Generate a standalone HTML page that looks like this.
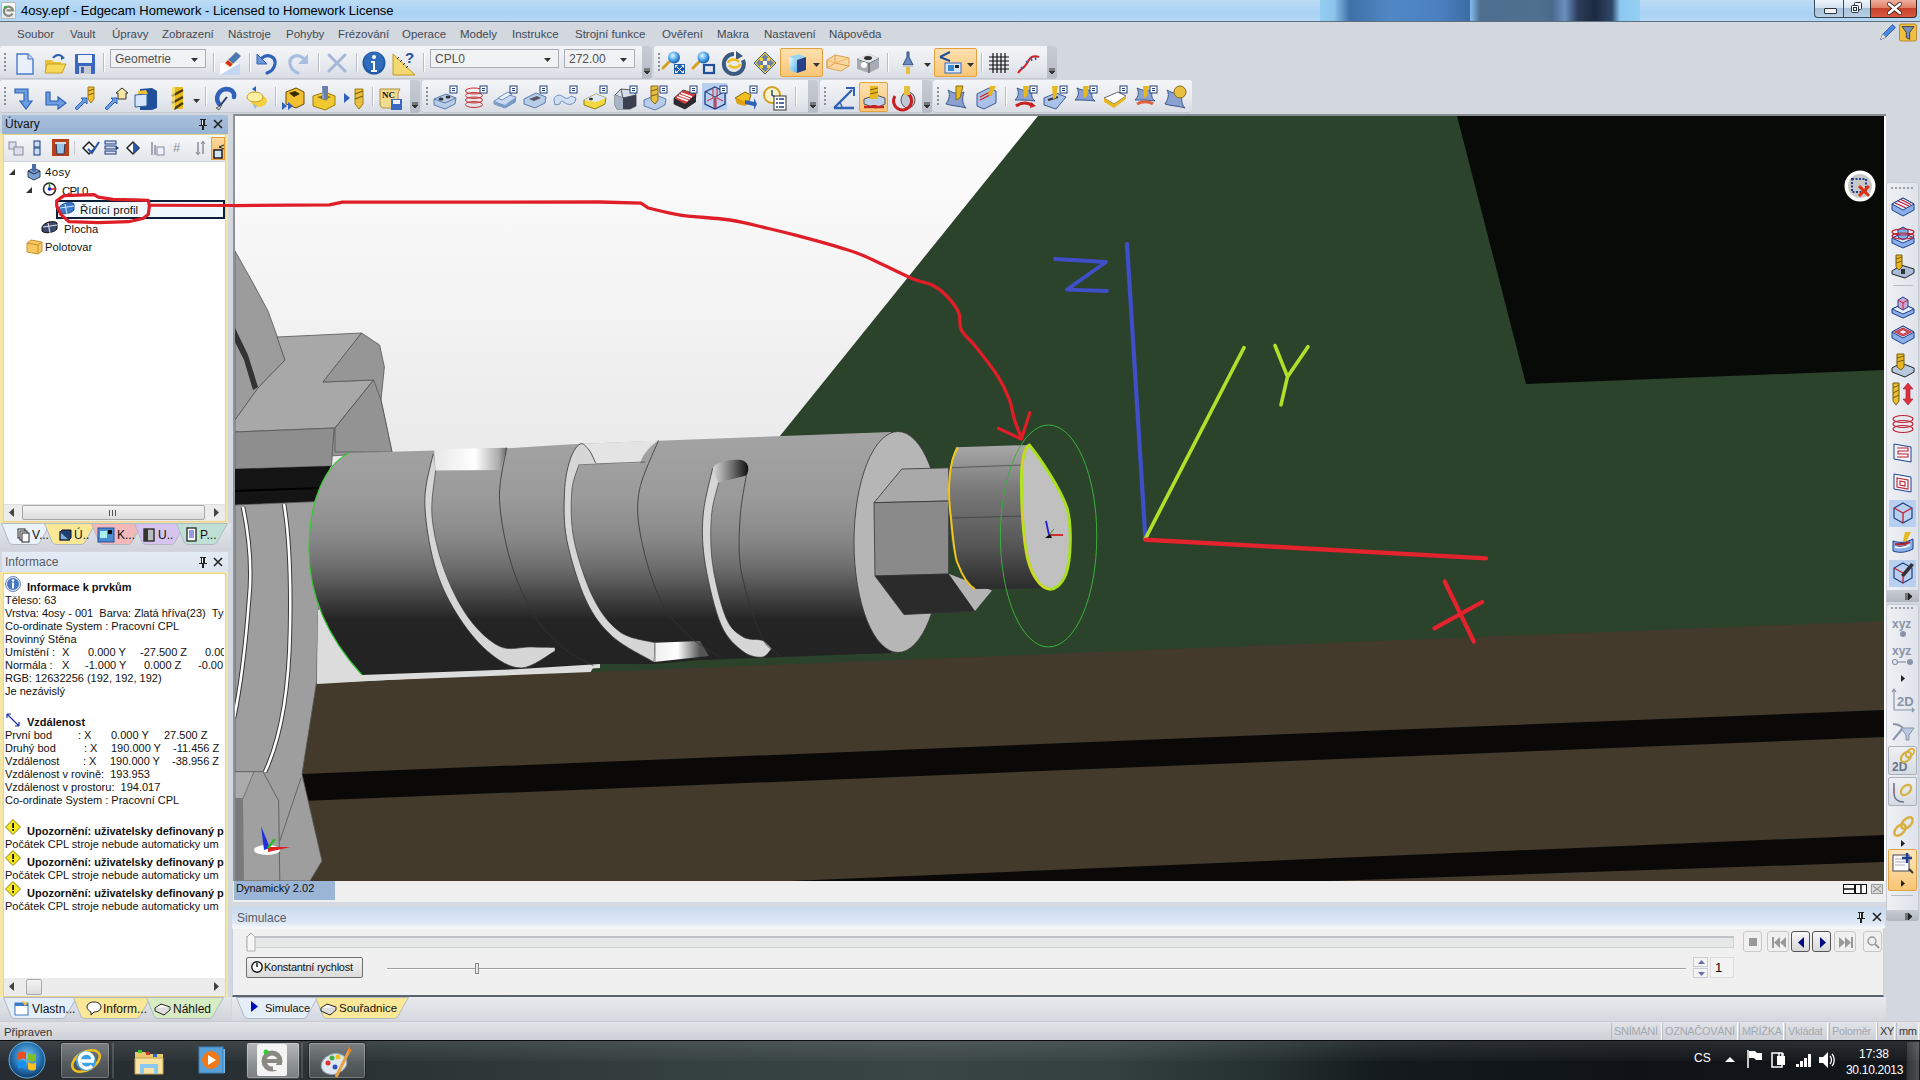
<!DOCTYPE html>
<html><head><meta charset="utf-8"><style>
html,body{margin:0;padding:0;}
svg{display:block;}
body{width:1920px;height:1080px;position:relative;overflow:hidden;background:#d3d7de;font-family:"Liberation Sans", sans-serif;}
</style></head><body>
<div style="position:absolute;left:0px;top:0px;width:1920px;height:22px;background:linear-gradient(#bcdcf6,#a9d2f4 60%,#b6d9f5);"></div><div style="position:absolute;left:1320px;top:0px;width:320px;height:21px;background:linear-gradient(90deg,#92cdf2 0px,#8cc4ec 14px,#3f70a8 30px,#5088c4 70px,#4a80c0 120px,#3c6ca4 150px,#4e86c2 140px,#82b8e6 150px,#7ab0e0 152px,#4e6e90 160px,#50708f 220px,#4a6a8c 232px,#6a90c0 245px,#2a3c58 258px,#1c2a40 275px,#30486a 292px,#8cc8f0 300px,#94d0f4 320px);"></div><div style="position:absolute;left:1px;top:2px;width:15px;height:17px;background:linear-gradient(#fdfdfd,#e8e8e8);border:1px solid #b8b8b8;border-radius:1px;box-sizing:border-box;"><svg width="13" height="15" viewBox="0 0 13 15"><path d="M10.5 10.5A4.6 4.6 0 1 1 11 7.4H4.5" fill="none" stroke="#8a8a80" stroke-width="2.4"/><circle cx="3.3" cy="4.2" r="1.4" fill="#40b040"/></svg></div><div style="position:absolute;left:21px;top:4px;font-size:13px;color:#000;white-space:nowrap;line-height:1;">4osy.epf - Edgecam Homework - Licensed to Homework License</div><div style="position:absolute;left:1814px;top:0px;width:29px;height:18px;background:linear-gradient(#eef4fa,#d4e2f0 45%,#a9c2da 50%,#b8d0e6);border:1px solid #3c4a5a;border-top:none;border-right:none;border-radius:0 0 0 4px;box-sizing:border-box;"><div style="position:absolute;left:9px;top:8px;width:11px;height:4px;background:#f4f4f4;border:1px solid #2a3440;border-radius:1px;"></div></div><div style="position:absolute;left:1843px;top:0px;width:27px;height:18px;background:linear-gradient(#eef4fa,#d4e2f0 45%,#a9c2da 50%,#b8d0e6);border:1px solid #3c4a5a;border-top:none;border-right:none;box-sizing:border-box;"><svg style="position:absolute;left:7px;top:2px;overflow:visible" width="12" height="12" viewBox="0 0 12 12"><rect x="3.5" y="0.5" width="7" height="7" rx="1" fill="#f4f4f4" stroke="#2a3440"/><rect x="0.5" y="3.5" width="7" height="7" rx="1" fill="#f4f4f4" stroke="#2a3440"/><rect x="2.5" y="5.5" width="3" height="3" fill="none" stroke="#2a3440"/></svg></div><div style="position:absolute;left:1870px;top:0px;width:47px;height:18px;background:linear-gradient(#f0b0a0,#e08068 45%,#c8402a 50%,#d85a40);border:1px solid #3c2a24;border-top:none;border-radius:0 0 4px 0;box-sizing:border-box;"><svg style="position:absolute;left:16px;top:3px;overflow:visible" width="15" height="11" viewBox="0 0 15 11"><path d="M2 1l11 9M13 1L2 10" stroke="#3a2a28" stroke-width="4.2" stroke-linecap="round"/><path d="M2 1l11 9M13 1L2 10" stroke="#fff" stroke-width="2.6" stroke-linecap="round"/></svg></div><div style="position:absolute;left:0px;top:21px;width:1920px;height:1px;background:#5f6f80;"></div><div style="position:absolute;left:0px;top:22px;width:1920px;height:24px;background:#d3d7de;"></div><div style="position:absolute;left:17px;top:29px;font-size:11.5px;color:#414a56;white-space:nowrap;line-height:1;">Soubor</div><div style="position:absolute;left:70px;top:29px;font-size:11.5px;color:#414a56;white-space:nowrap;line-height:1;">Vault</div><div style="position:absolute;left:112px;top:29px;font-size:11.5px;color:#414a56;white-space:nowrap;line-height:1;">Úpravy</div><div style="position:absolute;left:162px;top:29px;font-size:11.5px;color:#414a56;white-space:nowrap;line-height:1;">Zobrazení</div><div style="position:absolute;left:228px;top:29px;font-size:11.5px;color:#414a56;white-space:nowrap;line-height:1;">Nástroje</div><div style="position:absolute;left:286px;top:29px;font-size:11.5px;color:#414a56;white-space:nowrap;line-height:1;">Pohyby</div><div style="position:absolute;left:338px;top:29px;font-size:11.5px;color:#414a56;white-space:nowrap;line-height:1;">Frézování</div><div style="position:absolute;left:402px;top:29px;font-size:11.5px;color:#414a56;white-space:nowrap;line-height:1;">Operace</div><div style="position:absolute;left:460px;top:29px;font-size:11.5px;color:#414a56;white-space:nowrap;line-height:1;">Modely</div><div style="position:absolute;left:512px;top:29px;font-size:11.5px;color:#414a56;white-space:nowrap;line-height:1;">Instrukce</div><div style="position:absolute;left:575px;top:29px;font-size:11.5px;color:#414a56;white-space:nowrap;line-height:1;">Strojní funkce</div><div style="position:absolute;left:662px;top:29px;font-size:11.5px;color:#414a56;white-space:nowrap;line-height:1;">Ověření</div><div style="position:absolute;left:717px;top:29px;font-size:11.5px;color:#414a56;white-space:nowrap;line-height:1;">Makra</div><div style="position:absolute;left:764px;top:29px;font-size:11.5px;color:#414a56;white-space:nowrap;line-height:1;">Nastavení</div><div style="position:absolute;left:829px;top:29px;font-size:11.5px;color:#414a56;white-space:nowrap;line-height:1;">Nápověda</div><svg style="position:absolute;left:1879px;top:23px;overflow:visible" width="18" height="18" viewBox="0 0 24 24"><path d="M2 22l3-7 13-13 4 4L9 19z" fill="#4a8ae0" stroke="#1f4f9a" stroke-width="1"/><path d="M2 22l3-7 4 4z" fill="#f0e0c0"/></svg><svg style="position:absolute;left:1899px;top:24px;overflow:visible" width="18" height="17" viewBox="0 0 20 20"><rect x="0" y="0" width="20" height="20" rx="2" fill="#f0c040" stroke="#b08020" stroke-width="1"/><path d="M3 3h14l-5 7v8l-4-2v-6z" fill="#7a90b8" stroke="#334" stroke-width="1"/></svg><div style="position:absolute;left:0px;top:46px;width:652px;height:33px;background:linear-gradient(#f4f5f8,#e6e9ee 60%,#d9dde4);border-radius:3px;border-bottom:1px solid #c3c8d0;box-sizing:border-box;"></div><div style="position:absolute;left:4px;top:53px;width:2px;height:19px;background:repeating-linear-gradient(#8a909a 0 2px, transparent 2px 4px);"></div><div style="position:absolute;left:642px;top:46px;width:10px;height:33px;background:linear-gradient(#c8ccd4,#b6bcc6);border-radius:0 3px 3px 0;"><svg style="position:absolute;left:1px;top:22px" width="8" height="8"><path d="M1 1h6M1 3h6l-3 3z" stroke="#333" fill="#333" stroke-width="1"/></svg></div><svg style="position:absolute;left:13px;top:52px;overflow:visible" width="24" height="24" viewBox="0 0 24 24"><path d="M4 2h11l5 5v15H4z" fill="#eaf0fb" stroke="#4a78c8" stroke-width="1.4"/><path d="M15 2v5h5" fill="#cfdcf3" stroke="#4a78c8" stroke-width="1.2"/></svg><svg style="position:absolute;left:43px;top:52px;overflow:visible" width="24" height="24" viewBox="0 0 24 24"><path d="M2 8h7l2 2h7v11H2z" fill="#e9c23a"/><path d="M4 12h19l-4 9H2z" fill="#f7d95a" stroke="#c9a020" stroke-width="1"/><path d="M10 6c3-4 8-4 10 0" fill="none" stroke="#2a5fb0" stroke-width="2"/><path d="M18 3l4 3-4 2z" fill="#2a5fb0"/></svg><svg style="position:absolute;left:73px;top:52px;overflow:visible" width="24" height="24" viewBox="0 0 24 24"><rect x="2" y="2" width="20" height="20" rx="1" fill="#3a68c0"/><rect x="5" y="3" width="14" height="8" fill="#eef2f8"/><rect x="6" y="14" width="12" height="8" fill="#c9ccd2"/><rect x="8" y="15" width="3" height="6" fill="#3a68c0"/></svg><div style="position:absolute;left:103px;top:53px;width:1px;height:19px;background:#b9bec6;border-right:1px solid #fff;"></div><div style="position:absolute;left:110px;top:49px;width:96px;height:19px;background:#f1f2f4;border:1px solid #a9adb5;box-sizing:border-box;"><div style="position:absolute;left:4px;top:3px;font-size:12px;color:#505050;white-space:nowrap;line-height:1;">Geometrie</div><svg style="position:absolute;left:80px;top:-2px;overflow:visible" width="8" height="16" viewBox="0 0 8 16"><path d="M0 10h7l-3.5 4z" fill="#333"/></svg></div><div style="position:absolute;left:213px;top:53px;width:1px;height:19px;background:#b9bec6;border-right:1px solid #fff;"></div><svg style="position:absolute;left:219px;top:51px;overflow:visible" width="24" height="24" viewBox="0 0 24 24"><path d="M1 12h20v12H1z" fill="#c5d6f0"/><path d="M1 24l20-12H1z" fill="#fff"/><path d="M9 9l8-8 5 4-8 8z" fill="#4a7ab0"/><path d="M9 9l5 4-3 3-5-4z" fill="#d42a2a" stroke="#e0b040" stroke-width="1"/></svg><div style="position:absolute;left:249px;top:53px;width:1px;height:19px;background:#b9bec6;border-right:1px solid #fff;"></div><svg style="position:absolute;left:255px;top:51px;overflow:visible" width="24" height="24" viewBox="0 0 24 24"><path d="M7 7c6-5 14-1 13 6-1 5-5 8-8 9" fill="none" stroke="#2f62b8" stroke-width="3.2" stroke-linecap="round"/><path d="M2 3v10h10z" fill="#6b97d8" stroke="#2f62b8" stroke-width="1"/></svg><svg style="position:absolute;left:286px;top:51px;overflow:visible" width="24" height="24" viewBox="0 0 24 24"><path d="M17 7c-6-5-14-1-13 6 1 5 5 8 8 9" fill="none" stroke="#a9bde0" stroke-width="3.2" stroke-linecap="round"/><path d="M22 3v10H12z" fill="#a9bde0"/></svg><div style="position:absolute;left:318px;top:53px;width:1px;height:19px;background:#b9bec6;border-right:1px solid #fff;"></div><svg style="position:absolute;left:325px;top:51px;overflow:visible" width="24" height="24" viewBox="0 0 24 24"><path d="M4 4l16 16M20 4L4 20" stroke="#a6b8d8" stroke-width="3" stroke-linecap="round"/></svg><div style="position:absolute;left:356px;top:53px;width:1px;height:19px;background:#b9bec6;border-right:1px solid #fff;"></div><svg style="position:absolute;left:362px;top:51px;overflow:visible" width="24" height="24" viewBox="0 0 24 24"><circle cx="12" cy="12" r="11.5" fill="#1f5aa6"/><circle cx="12" cy="11" r="10" fill="#2f6cbc"/><circle cx="12" cy="6" r="2" fill="#fff"/><path d="M9 10h4v9h2v2H9v-2h2v-7H9z" fill="#fff"/></svg><svg style="position:absolute;left:392px;top:51px;overflow:visible" width="24" height="24" viewBox="0 0 24 24"><path d="M1 3l22 21H1z" fill="#f3d770" stroke="#c59a20" stroke-width="1"/><path d="M5 8l2-2M8 11l2-2M11 14l2-2M14 17l2-2" stroke="#333" stroke-width="1"/><text x="13" y="12" font-size="15" font-weight="bold" fill="#2a4fa0" font-family="Liberation Sans">?</text></svg><div style="position:absolute;left:423px;top:53px;width:1px;height:19px;background:#b9bec6;border-right:1px solid #fff;"></div><div style="position:absolute;left:430px;top:49px;width:129px;height:19px;background:#f1f2f4;border:1px solid #a9adb5;box-sizing:border-box;"><div style="position:absolute;left:4px;top:3px;font-size:12px;color:#505050;white-space:nowrap;line-height:1;">CPL0</div><svg style="position:absolute;left:113px;top:-2px;overflow:visible" width="8" height="16" viewBox="0 0 8 16"><path d="M0 10h7l-3.5 4z" fill="#333"/></svg></div><div style="position:absolute;left:564px;top:49px;width:71px;height:19px;background:#f1f2f4;border:1px solid #a9adb5;box-sizing:border-box;"><div style="position:absolute;left:4px;top:3px;font-size:12px;color:#505050;white-space:nowrap;line-height:1;">272.00</div><svg style="position:absolute;left:55px;top:-2px;overflow:visible" width="8" height="16" viewBox="0 0 8 16"><path d="M0 10h7l-3.5 4z" fill="#333"/></svg></div><div style="position:absolute;left:654px;top:46px;width:403px;height:33px;background:linear-gradient(#f4f5f8,#e6e9ee 60%,#d9dde4);border-radius:3px;border-bottom:1px solid #c3c8d0;box-sizing:border-box;"></div><div style="position:absolute;left:658px;top:53px;width:2px;height:19px;background:repeating-linear-gradient(#8a909a 0 2px, transparent 2px 4px);"></div><div style="position:absolute;left:1047px;top:46px;width:10px;height:33px;background:linear-gradient(#c8ccd4,#b6bcc6);border-radius:0 3px 3px 0;"><svg style="position:absolute;left:1px;top:22px" width="8" height="8"><path d="M1 1h6M1 3h6l-3 3z" stroke="#333" fill="#333" stroke-width="1"/></svg></div><svg style="position:absolute;left:662px;top:51px;overflow:visible" width="24" height="24" viewBox="0 0 24 24"><defs><radialGradient id="mg1" cx="40%" cy="35%" r="60%"><stop offset="0" stop-color="#e8f6ff"/><stop offset=".5" stop-color="#6ab8f0"/><stop offset="1" stop-color="#1a68b8"/></radialGradient></defs><path d="M7 11L1 17" stroke="#d8a020" stroke-width="3" stroke-linecap="round"/><circle cx="12" cy="6.5" r="6" fill="url(#mg1)"/><rect x="12" y="13" width="11" height="10" fill="#1f5aa8"/><path d="M13 14l3 0-3 3zM22 14v3l-3-3zM13 22v-3l3 3zM22 22h-3l3-3z" fill="#fff"/><path d="M15 16l5 5M20 16l-5 5" stroke="#fff" stroke-width="1"/></svg><svg style="position:absolute;left:692px;top:51px;overflow:visible" width="24" height="24" viewBox="0 0 24 24"><path d="M7 11L1 17" stroke="#d8a020" stroke-width="3" stroke-linecap="round"/><circle cx="11.5" cy="6.5" r="6" fill="url(#mg1)"/><rect x="12" y="14" width="10" height="8" fill="none" stroke="#1f4f9a" stroke-width="2.2"/></svg><svg style="position:absolute;left:722px;top:51px;overflow:visible" width="24" height="24" viewBox="0 0 24 24"><path d="M12 3a10 10 0 1 0 9 6" fill="none" stroke="#3a5a80" stroke-width="4"/><path d="M14 0l7 5-7 4z" fill="#3a5a80"/><path d="M6 12c1-4 8-5 11-1" fill="none" stroke="#f0c020" stroke-width="2.5"/><path d="M18 13c-1 4-8 5-11 1" fill="none" stroke="#f0c020" stroke-width="2.5"/></svg><svg style="position:absolute;left:753px;top:51px;overflow:visible" width="24" height="24" viewBox="0 0 24 24"><path d="M12 1l11 11-11 11L1 12z" fill="#f4d040" stroke="#3a5a80" stroke-width="1"/><path d="M12 3l4 4h-2v3h-4V7H8zM12 21l4-4h-2v-3h-4v3H8zM3 12l4-4v2h3v4H7v2zM21 12l-4-4v2h-3v4h3v2z" fill="#6a80a8"/><rect x="10" y="10" width="4" height="4" fill="#fff"/></svg><div style="position:absolute;left:780px;top:48px;width:43px;height:29px;background:linear-gradient(#fde1b0,#f8c576);border:1px solid #e3a23e;border-radius:2px;box-sizing:border-box;"></div><svg style="position:absolute;left:785px;top:51px;overflow:visible" width="24" height="24" viewBox="0 0 24 24"><defs><linearGradient id="cf" x1="0" y1="0" x2="1" y2="1"><stop offset="0" stop-color="#e8fbff"/><stop offset="1" stop-color="#5ab0e8"/></linearGradient></defs><path d="M4 6l10-3 7 3-9 3z" fill="#9ad4f4"/><path d="M4 6l8 3v13l-8-3z" fill="url(#cf)"/><path d="M12 9l9-3v13l-9 3z" fill="#28408a"/></svg><svg style="position:absolute;left:813px;top:53px;overflow:visible" width="8" height="16" viewBox="0 0 8 16"><path d="M0 10h7l-3.5 4z" fill="#333"/></svg><svg style="position:absolute;left:826px;top:51px;overflow:visible" width="24" height="24" viewBox="0 0 24 24"><path d="M1 9l8-5 14 3v8l-8 5-14-3z" fill="#f8d8a0" stroke="#e0a050" stroke-width="1"/><path d="M1 9v8M9 4v8l14 3M9 12l-8 5" fill="none" stroke="#e0a050" stroke-width="1"/><path d="M1 9l8 3 14-5" fill="none" stroke="#f0b860"/></svg><svg style="position:absolute;left:856px;top:51px;overflow:visible" width="24" height="24" viewBox="0 0 24 24"><path d="M1 8l12-5 10 4v10l-10 5-12-4z" fill="#a8acb4"/><path d="M1 8l12 4 10-5" fill="none" stroke="#444" stroke-width="1"/><path d="M13 12v10" stroke="#444"/><ellipse cx="8" cy="14" rx="3" ry="3" fill="#fff"/><path d="M1 8l12-5 10 4-10 5z" fill="#e0e3e8"/><ellipse cx="12" cy="7" rx="4" ry="2" fill="#333"/></svg><div style="position:absolute;left:887px;top:53px;width:1px;height:19px;background:#b9bec6;border-right:1px solid #fff;"></div><svg style="position:absolute;left:896px;top:51px;overflow:visible" width="24" height="24" viewBox="0 0 24 24"><path d="M11 1h2v5l4 8H7l4-8z" fill="#6a8ac0" stroke="#2a4a80" stroke-width="1"/><rect x="10" y="14" width="4" height="9" fill="#e8c040"/><rect x="7" y="14" width="10" height="2" fill="#c0c8d8"/></svg><svg style="position:absolute;left:924px;top:53px;overflow:visible" width="8" height="16" viewBox="0 0 8 16"><path d="M0 10h7l-3.5 4z" fill="#333"/></svg><div style="position:absolute;left:934px;top:48px;width:43px;height:29px;background:linear-gradient(#fde1b0,#f8c576);border:1px solid #e3a23e;border-radius:2px;box-sizing:border-box;"></div><svg style="position:absolute;left:938px;top:50px;overflow:visible" width="24" height="24" viewBox="0 0 24 24"><path d="M2 7l10-5M2 7l10 4" stroke="#1f4f9a" stroke-width="2" fill="none"/><rect x="7" y="13" width="16" height="10" fill="#d8e8f8" stroke="#3a68c0" stroke-width="1"/><rect x="10" y="15" width="6" height="6" fill="#3a8ad0"/><rect x="17" y="15" width="4" height="3" fill="#222"/></svg><svg style="position:absolute;left:967px;top:53px;overflow:visible" width="8" height="16" viewBox="0 0 8 16"><path d="M0 10h7l-3.5 4z" fill="#333"/></svg><div style="position:absolute;left:981px;top:53px;width:1px;height:19px;background:#b9bec6;border-right:1px solid #fff;"></div><svg style="position:absolute;left:987px;top:51px;overflow:visible" width="24" height="24" viewBox="0 0 24 24"><path d="M6 2v20M10 2v20M14 2v20M18 2v20M2 6h20M2 10h20M2 14h20M2 18h20" stroke="#111" stroke-width="1.2"/></svg><svg style="position:absolute;left:1017px;top:51px;overflow:visible" width="24" height="24" viewBox="0 0 24 24"><path d="M1 22c4-6 6-4 9-10s6-8 12-6" fill="none" stroke="#d42020" stroke-width="2"/><path d="M4 16l2 2M9 10l2 2M14 7l1 3M18 6l1 3" stroke="#2f62b8" stroke-width="1.5"/></svg><div style="position:absolute;left:0px;top:80px;width:420px;height:33px;background:linear-gradient(#f4f5f8,#e6e9ee 60%,#d9dde4);border-radius:3px;border-bottom:1px solid #c3c8d0;box-sizing:border-box;"></div><div style="position:absolute;left:4px;top:87px;width:2px;height:19px;background:repeating-linear-gradient(#8a909a 0 2px, transparent 2px 4px);"></div><div style="position:absolute;left:410px;top:80px;width:10px;height:33px;background:linear-gradient(#c8ccd4,#b6bcc6);border-radius:0 3px 3px 0;"><svg style="position:absolute;left:1px;top:22px" width="8" height="8"><path d="M1 1h6M1 3h6l-3 3z" stroke="#333" fill="#333" stroke-width="1"/></svg></div><svg style="position:absolute;left:14px;top:87px;overflow:visible" width="24" height="24" viewBox="0 0 24 24"><path d="M1 2h13v12h4l-6 8-6-8h4V6H1z" fill="#6c9ee0" stroke="#2f62b8" stroke-width="1.2"/></svg><svg style="position:absolute;left:44px;top:87px;overflow:visible" width="24" height="24" viewBox="0 0 24 24"><path d="M2 5h4v9h8v-4l8 6-8 6v-4H2z" fill="#6c9ee0" stroke="#2f62b8" stroke-width="1.2"/></svg><svg style="position:absolute;left:73px;top:86px;overflow:visible" width="24" height="24" viewBox="0 0 24 24"><path d="M2 22l8-8-2-2h6v6l-2-2-8 8z" fill="#6c9ee0" stroke="#2f62b8" stroke-width="1"/><path d="M15 1h6v12l-3 4-3-4z" fill="#f0c030" stroke="#a07a10" stroke-width="1"/><path d="M15 5l6-2M15 9l6-2" stroke="#7a5a10" stroke-width="1"/></svg><svg style="position:absolute;left:103px;top:86px;overflow:visible" width="24" height="24" viewBox="0 0 24 24"><path d="M2 22l8-8-2-2h6v6l-2-2-8 8z" fill="#6c9ee0" stroke="#2f62b8" stroke-width="1"/><path d="M13 7l6-5 6 5h-2v6h-8V7z" fill="#f7e6a0" stroke="#333" stroke-width="1"/></svg><svg style="position:absolute;left:134px;top:86px;overflow:visible" width="24" height="24" viewBox="0 0 24 24"><path d="M6 3l12-1 5 3v17l-5 2H6z" fill="#1f4f9a"/><path d="M1 9l12-1v12l-12 1z" fill="#d6e6f7" stroke="#2a5aa0" stroke-width="1"/><path d="M4 5l8-1 2 4H4z" fill="#f0c030"/></svg><svg style="position:absolute;left:165px;top:86px;overflow:visible" width="24" height="24" viewBox="0 0 24 24"><rect x="7" y="1" width="11" height="22" rx="1" fill="#e8b820"/><path d="M7 10l11-6M7 17l11-6M9 23l9-6" stroke="#4a3a10" stroke-width="2.5"/><rect x="7" y="1" width="3" height="22" fill="#fff3a0" opacity=".6"/></svg><svg style="position:absolute;left:193px;top:89px;overflow:visible" width="8" height="16" viewBox="0 0 8 16"><path d="M0 10h7l-3.5 4z" fill="#333"/></svg><div style="position:absolute;left:205px;top:87px;width:1px;height:19px;background:#b9bec6;border-right:1px solid #fff;"></div><svg style="position:absolute;left:214px;top:86px;overflow:visible" width="24" height="24" viewBox="0 0 24 24"><path d="M5 18C1 12 4 4 12 3c6 0 9 4 8 8" fill="none" stroke="#2f62b8" stroke-width="4.5" stroke-linecap="round"/><path d="M13 11l-8 10" stroke="#2a3a60" stroke-width="2"/><path d="M2 22l6-3-3 5z" fill="#d0d0d0" stroke="#666" stroke-width="1"/></svg><svg style="position:absolute;left:245px;top:86px;overflow:visible" width="24" height="24" viewBox="0 0 24 24"><ellipse cx="14" cy="15" rx="8" ry="6" fill="#f2d040"/><ellipse cx="10" cy="11" rx="8" ry="5" fill="#fff0a0" stroke="#c8a020" stroke-width="1"/><path d="M7 3l4-3v6z" fill="#2f62b8"/><path d="M8 18l4 2-2 3z" fill="#8ab8e8"/></svg><div style="position:absolute;left:275px;top:87px;width:1px;height:19px;background:#b9bec6;border-right:1px solid #fff;"></div><svg style="position:absolute;left:281px;top:86px;overflow:visible" width="24" height="24" viewBox="0 0 24 24"><path d="M5 6l10-4 8 4v12l-8 4-10-4z" fill="#f2c030" stroke="#6a4a00" stroke-width="1"/><path d="M8 7l6-2 5 3-6 3z" fill="#3a2a00"/><path d="M1 16l5 4-5 4zM7 16l5 4-5 4z" fill="#2f62b8"/></svg><svg style="position:absolute;left:312px;top:86px;overflow:visible" width="24" height="24" viewBox="0 0 24 24"><path d="M1 10l12-4 10 4v9l-10 5-12-4z" fill="#f2c830" stroke="#9a7a10" stroke-width="1"/><path d="M5 11l8-2 6 2-7 3z" fill="#8a6a10"/><rect x="10" y="0" width="6" height="13" fill="#8aa0c8"/><path d="M10 0h6v13l-3 2z" fill="#6a80a8"/></svg><svg style="position:absolute;left:343px;top:86px;overflow:visible" width="24" height="24" viewBox="0 0 24 24"><path d="M1 7l6 5-6 5z" fill="#2f62b8"/><path d="M12 3h8v15l-4 5-4-5z" fill="#e8c040" stroke="#a07a10" stroke-width="1"/><path d="M12 8l8-3M12 13l8-3" stroke="#7a5a10" stroke-width="1.2"/></svg><div style="position:absolute;left:372px;top:87px;width:1px;height:19px;background:#b9bec6;border-right:1px solid #fff;"></div><svg style="position:absolute;left:379px;top:86px;overflow:visible" width="24" height="24" viewBox="0 0 24 24"><path d="M1 3h20l-2 4v15H3l-2-3z" fill="#f3dc90" stroke="#b09040" stroke-width="1"/><text x="3" y="12" font-size="9" font-weight="bold" font-family="Liberation Serif" fill="#111">NC</text><rect x="12" y="13" width="11" height="11" fill="#3a68c0"/><rect x="14" y="14" width="7" height="4" fill="#eef"/></svg><div style="position:absolute;left:422px;top:80px;width:396px;height:33px;background:linear-gradient(#f4f5f8,#e6e9ee 60%,#d9dde4);border-radius:3px;border-bottom:1px solid #c3c8d0;box-sizing:border-box;"></div><div style="position:absolute;left:426px;top:87px;width:2px;height:19px;background:repeating-linear-gradient(#8a909a 0 2px, transparent 2px 4px);"></div><div style="position:absolute;left:808px;top:80px;width:10px;height:33px;background:linear-gradient(#c8ccd4,#b6bcc6);border-radius:0 3px 3px 0;"><svg style="position:absolute;left:1px;top:22px" width="8" height="8"><path d="M1 1h6M1 3h6l-3 3z" stroke="#333" fill="#333" stroke-width="1"/></svg></div><svg style="position:absolute;left:433px;top:86px;overflow:visible" width="24" height="24" viewBox="0 0 24 24"><path d="M1 13l12-5 10 4-1 6-10 5-11-4z" fill="#b8cce8" stroke="#5a7ab0" stroke-width="1"/><path d="M1 13l11 4 11-5" fill="none" stroke="#5a7ab0"/><ellipse cx="8" cy="13" rx="2.5" ry="1.5" fill="#333"/><ellipse cx="15" cy="11" rx="2.5" ry="1.5" fill="#333"/><rect x="17" y="0" width="7" height="7" fill="#fff" stroke="#1f3f80" stroke-width="1"/><path d="M19 2.5h3M19 4.5h3" stroke="#1f3f80" stroke-width="1"/></svg><svg style="position:absolute;left:463px;top:86px;overflow:visible" width="24" height="24" viewBox="0 0 24 24"><g fill="none" stroke="#c83030" stroke-width="1"><ellipse cx="11" cy="5" rx="8.5" ry="3"/><ellipse cx="11" cy="9.5" rx="8.5" ry="3"/><ellipse cx="11" cy="14" rx="8.5" ry="3"/><ellipse cx="11" cy="18.5" rx="8.5" ry="3"/></g><rect x="17" y="0" width="7" height="7" fill="#fff" stroke="#1f3f80" stroke-width="1"/><path d="M19 2.5h3M19 4.5h3" stroke="#1f3f80" stroke-width="1"/></svg><svg style="position:absolute;left:493px;top:86px;overflow:visible" width="24" height="24" viewBox="0 0 24 24"><path d="M1 15l12-7 10 3-1 5-10 6-11-4z" fill="#c8d8f0" stroke="#5a7ab0" stroke-width=".8"/><path d="M5 12l10-6 4 2-10 6z" fill="#eef4fc" stroke="#5a7ab0" stroke-width=".8"/><path d="M1 15l11 4 11-8v5l-10 6-11-4z" fill="#7a9ac8"/><rect x="17" y="0" width="7" height="7" fill="#fff" stroke="#1f3f80" stroke-width="1"/><path d="M19 2.5h3M19 4.5h3" stroke="#1f3f80" stroke-width="1"/></svg><svg style="position:absolute;left:523px;top:86px;overflow:visible" width="24" height="24" viewBox="0 0 24 24"><path d="M1 13l12-6 10 4-1 6-10 5-11-4z" fill="#b8cce8" stroke="#5a7ab0" stroke-width="1"/><path d="M6 13l8-3 4 2-7 3z" fill="#556"/><rect x="17" y="0" width="7" height="7" fill="#fff" stroke="#1f3f80" stroke-width="1"/><path d="M19 2.5h3M19 4.5h3" stroke="#1f3f80" stroke-width="1"/></svg><svg style="position:absolute;left:553px;top:86px;overflow:visible" width="24" height="24" viewBox="0 0 24 24"><path d="M1 14c0-4 5-6 8-4l3 2c2 1 4 0 6-2l5 2-1 4c-3 3-7 3-10 1l-3-2c-1 0-2 1-2 3l-5 1z" fill="#d0e0f4" stroke="#5a7ab0" stroke-width=".8"/><rect x="17" y="0" width="7" height="7" fill="#fff" stroke="#1f3f80" stroke-width="1"/><path d="M19 2.5h3M19 4.5h3" stroke="#1f3f80" stroke-width="1"/></svg><svg style="position:absolute;left:583px;top:86px;overflow:visible" width="24" height="24" viewBox="0 0 24 24"><path d="M1 14l12-6 10 4-1 6-10 5-11-4z" fill="#f4d840" stroke="#8a7a20" stroke-width="1"/><path d="M1 14l12-6 10 4-10 4z" fill="#dde8f8"/><ellipse cx="8" cy="13" rx="2" ry="1.2" fill="#333"/><rect x="17" y="0" width="7" height="7" fill="#fff" stroke="#1f3f80" stroke-width="1"/><path d="M19 2.5h3M19 4.5h3" stroke="#1f3f80" stroke-width="1"/></svg><svg style="position:absolute;left:613px;top:86px;overflow:visible" width="24" height="24" viewBox="0 0 24 24"><path d="M2 9l6-6 12 1 3 5v11l-6 3H4l-2-4z" fill="#d8dee8" stroke="#333" stroke-width=".8"/><path d="M8 3l2 9 13-3M10 12l-8-3M10 12v11" fill="none" stroke="#333" stroke-width=".8"/><path d="M10 12l13-3v11l-6 3h-7z" fill="#3a4050"/><path d="M2 9l8 3v11H4l-2-4z" fill="#a8b4c8"/><rect x="17" y="0" width="7" height="7" fill="#fff" stroke="#1f3f80" stroke-width="1"/><path d="M19 2.5h3M19 4.5h3" stroke="#1f3f80" stroke-width="1"/></svg><svg style="position:absolute;left:643px;top:86px;overflow:visible" width="24" height="24" viewBox="0 0 24 24"><path d="M1 14l12-5 10 4-1 6-10 5-11-4z" fill="#b8cce8" stroke="#5a7ab0" stroke-width="1"/><path d="M8 0h7v14l-3 4-4-4z" fill="#e8c040" stroke="#8a6a10" stroke-width="1"/><path d="M8 5l7-2M8 10l7-2" stroke="#7a5a10"/><rect x="17" y="0" width="7" height="7" fill="#fff" stroke="#1f3f80" stroke-width="1"/><path d="M19 2.5h3M19 4.5h3" stroke="#1f3f80" stroke-width="1"/></svg><svg style="position:absolute;left:673px;top:86px;overflow:visible" width="24" height="24" viewBox="0 0 24 24"><path d="M1 12l9-8 13 4-1 8-10 7-11-5z" fill="#d84040" stroke="#333" stroke-width=".8"/><path d="M4 11l11 4M6 9l11 4M8 7l11 4" stroke="#fff" stroke-width="1.4"/><path d="M1 12l11 6 11-10v8l-11 7-11-5z" fill="#2a2a30"/><rect x="17" y="0" width="7" height="7" fill="#fff" stroke="#1f3f80" stroke-width="1"/><path d="M19 2.5h3M19 4.5h3" stroke="#1f3f80" stroke-width="1"/></svg><div style="position:absolute;left:702px;top:83px;width:25px;height:27px;background:#b9cff0;"></div><svg style="position:absolute;left:703px;top:86px;overflow:visible" width="24" height="24" viewBox="0 0 24 24"><rect x="0" y="0" width="24" height="24" fill="#b8cff0"/><path d="M12 1l10 5v12l-10 5-10-5V6z" fill="none" stroke="#1f3f80" stroke-width="1.3"/><path d="M12 11l9-5M12 11L3 6M12 11v12" stroke="#1f3f80" stroke-width="1"/><path d="M10 3v9l-6 3M14 3v9l6 3M11 12v10M13 12v10" stroke="#d02030" stroke-width="1" fill="none"/><rect x="17" y="0" width="7" height="7" fill="#fff" stroke="#1f3f80" stroke-width="1"/><path d="M19 2.5h3M19 4.5h3" stroke="#1f3f80" stroke-width="1"/></svg><svg style="position:absolute;left:733px;top:86px;overflow:visible" width="24" height="24" viewBox="0 0 24 24"><path d="M2 12l10-6 6 3-2 6-4 2z" fill="#f0c020" stroke="#8a6a10" stroke-width="1"/><path d="M2 12l2 6 8 2 4-3" fill="#e0a010"/><path d="M12 14l9 2v-4l3 6-3 6v-4l-9-2z" fill="#2f62b8"/><rect x="17" y="0" width="7" height="7" fill="#fff" stroke="#1f3f80" stroke-width="1"/><path d="M19 2.5h3M19 4.5h3" stroke="#1f3f80" stroke-width="1"/></svg><svg style="position:absolute;left:763px;top:86px;overflow:visible" width="24" height="24" viewBox="0 0 24 24"><circle cx="9" cy="9" r="8" fill="#fbf3c8" stroke="#d0a020" stroke-width="2"/><path d="M9 4v5l3 2" stroke="#2a4a80" stroke-width="1.5" fill="none"/><rect x="11" y="10" width="12" height="14" fill="#fff" stroke="#333" stroke-width="1"/><path d="M13 13h2M16 13h5M13 17h2M16 17h5M13 21h2M16 21h5" stroke="#1f3f80" stroke-width="1.4"/></svg><div style="position:absolute;left:795px;top:87px;width:1px;height:19px;background:#b9bec6;border-right:1px solid #fff;"></div><div style="position:absolute;left:820px;top:80px;width:112px;height:33px;background:linear-gradient(#f4f5f8,#e6e9ee 60%,#d9dde4);border-radius:3px;border-bottom:1px solid #c3c8d0;box-sizing:border-box;"></div><div style="position:absolute;left:824px;top:87px;width:2px;height:19px;background:repeating-linear-gradient(#8a909a 0 2px, transparent 2px 4px);"></div><div style="position:absolute;left:922px;top:80px;width:10px;height:33px;background:linear-gradient(#c8ccd4,#b6bcc6);border-radius:0 3px 3px 0;"><svg style="position:absolute;left:1px;top:22px" width="8" height="8"><path d="M1 1h6M1 3h6l-3 3z" stroke="#333" fill="#333" stroke-width="1"/></svg></div><svg style="position:absolute;left:832px;top:86px;overflow:visible" width="24" height="24" viewBox="0 0 24 24"><path d="M2 22h20M2 22L20 4" stroke="#2f62b8" stroke-width="2.4" fill="none"/><path d="M14 2h8v8" fill="none" stroke="#2f62b8" stroke-width="2"/><path d="M10 22a8 8 0 0 0-3-6" fill="none" stroke="#2f62b8" stroke-width="1.5"/></svg><div style="position:absolute;left:859px;top:82px;width:29px;height:30px;background:linear-gradient(#fde1b0,#f8c576);border:1px solid #e3a23e;border-radius:2px;box-sizing:border-box;"></div><svg style="position:absolute;left:862px;top:85px;overflow:visible" width="24" height="24" viewBox="0 0 24 24"><path d="M2 14l12-4 9 3v6l-9 4-12-4z" fill="#c0d0e8" stroke="#555" stroke-width="1"/><rect x="8" y="1" width="8" height="13" fill="#e8b820"/><path d="M8 5l8-2M8 9l8-2" stroke="#7a5a10"/><path d="M2 22h20" stroke="#c82020" stroke-width="2.5"/><path d="M9 20l3 3 3-3" fill="#c82020"/></svg><svg style="position:absolute;left:892px;top:86px;overflow:visible" width="24" height="24" viewBox="0 0 24 24"><ellipse cx="16" cy="14" rx="7" ry="8" fill="#c0c8d4" stroke="#555"/><path d="M3 10a9 9 0 1 0 9-4" fill="none" stroke="#c82020" stroke-width="3"/><rect x="12" y="0" width="6" height="9" fill="#e8c040"/></svg><div style="position:absolute;left:933px;top:80px;width:259px;height:33px;background:linear-gradient(#f4f5f8,#e6e9ee 60%,#d9dde4);border-radius:3px;border-bottom:1px solid #c3c8d0;box-sizing:border-box;"></div><div style="position:absolute;left:937px;top:87px;width:2px;height:19px;background:repeating-linear-gradient(#8a909a 0 2px, transparent 2px 4px);"></div><svg style="position:absolute;left:944px;top:86px;overflow:visible" width="24" height="24" viewBox="0 0 24 24"><path d="M2 18c4-6 4-10 2-14 6 4 12 4 16 2-2 6-2 12 2 16-6-2-14-2-20-4z" fill="#8aa0d0" stroke="#3a5a90" stroke-width="1"/><path d="M12 0h7l-3 12-4 2z" fill="#e8b820" stroke="#8a6a10" stroke-width="1"/></svg><svg style="position:absolute;left:974px;top:86px;overflow:visible" width="24" height="24" viewBox="0 0 24 24"><path d="M3 8l12-6 7 3v12l-12 6-7-3z" fill="#a9c0e8" stroke="#3a5a90" stroke-width="1"/><path d="M6 11l12-6M6 14l12-6" stroke="#c82020" stroke-width="1.3"/><path d="M16 0h6l-5 10-3-1z" fill="#e8b820"/></svg><div style="position:absolute;left:1005px;top:87px;width:1px;height:19px;background:#b9bec6;border-right:1px solid #fff;"></div><svg style="position:absolute;left:1013px;top:86px;overflow:visible" width="24" height="24" viewBox="0 0 24 24"><path d="M2 14c4-4 4-8 2-12 6 3 12 3 16 1-2 5-2 9 2 12-6-1-14-1-20-1z" fill="#8aa0d0" stroke="#3a5a90" stroke-width="1"/><path d="M10 0h6l-2 10-3 2z" fill="#e8b820"/><path d="M3 20c5-4 12-4 17 0" fill="none" stroke="#c82020" stroke-width="3"/><path d="M18 16l5 4-6 2z" fill="#c82020"/><rect x="17" y="0" width="7" height="7" fill="#fff" stroke="#1f3f80" stroke-width="1"/><path d="M19 2.5h3M19 4.5h3" stroke="#1f3f80" stroke-width="1"/></svg><svg style="position:absolute;left:1043px;top:86px;overflow:visible" width="24" height="24" viewBox="0 0 24 24"><path d="M1 12l12-5 10 4-10 12-12-4z" fill="#a9c0e8" stroke="#3a5a90" stroke-width="1"/><path d="M5 14l10-3" stroke="#333" stroke-width="2"/><path d="M9 0h6l-2 12-3 1z" fill="#e8b820"/><rect x="17" y="0" width="7" height="7" fill="#fff" stroke="#1f3f80" stroke-width="1"/><path d="M19 2.5h3M19 4.5h3" stroke="#1f3f80" stroke-width="1"/></svg><svg style="position:absolute;left:1073px;top:86px;overflow:visible" width="24" height="24" viewBox="0 0 24 24"><path d="M2 14c4-4 4-8 2-12 6 3 12 3 16 1-2 5-2 9 2 12-6-1-14-1-20-1z" fill="#8aa0d0" stroke="#3a5a90" stroke-width="1"/><path d="M10 0h6l-2 10-3 2z" fill="#e8b820"/><rect x="17" y="0" width="7" height="7" fill="#fff" stroke="#1f3f80" stroke-width="1"/><path d="M19 2.5h3M19 4.5h3" stroke="#1f3f80" stroke-width="1"/></svg><svg style="position:absolute;left:1103px;top:86px;overflow:visible" width="24" height="24" viewBox="0 0 24 24"><path d="M1 12l14-6 8 4-12 8z" fill="#fff" stroke="#666" stroke-width="1"/><path d="M1 12l10 6 12-8v3l-12 9-10-6z" fill="#e8b820"/><rect x="17" y="0" width="7" height="7" fill="#fff" stroke="#1f3f80" stroke-width="1"/><path d="M19 2.5h3M19 4.5h3" stroke="#1f3f80" stroke-width="1"/></svg><svg style="position:absolute;left:1133px;top:86px;overflow:visible" width="24" height="24" viewBox="0 0 24 24"><path d="M2 14c4-4 4-8 2-12 6 3 12 3 16 1-2 5-2 9 2 12-6-1-14-1-20-1z" fill="#8aa0d0" stroke="#3a5a90" stroke-width="1"/><path d="M10 0h6l-2 10-3 2z" fill="#e8b820"/><path d="M4 18c5-3 12-3 16 0" fill="none" stroke="#e06040" stroke-width="3"/><rect x="17" y="0" width="7" height="7" fill="#fff" stroke="#1f3f80" stroke-width="1"/><path d="M19 2.5h3M19 4.5h3" stroke="#1f3f80" stroke-width="1"/></svg><svg style="position:absolute;left:1163px;top:86px;overflow:visible" width="24" height="24" viewBox="0 0 24 24"><path d="M2 18c4-6 4-10 2-14 6 4 12 4 16 2-2 6-2 12 2 16-6-2-14-2-20-4z" fill="#8aa0d0" stroke="#3a5a90" stroke-width="1"/><circle cx="17" cy="6" r="6" fill="#e8c040" stroke="#8a6a10"/></svg><div style="position:absolute;left:233px;top:114px;width:1653px;height:769px;background:#fff;border-top:2px solid #868b92;border-left:2px solid #8e939a;box-sizing:border-box;"></div><svg style="position:absolute;left:0;top:0" width="1920" height="1080" viewBox="0 0 1920 1080"><defs>
<clipPath id="vp"><rect x="235" y="116" width="1649" height="765"/></clipPath>
<linearGradient id="bg" x1="0" y1="116" x2="0" y2="700" gradientUnits="userSpaceOnUse"><stop offset="0" stop-color="#fefefe"/><stop offset="1" stop-color="#dcdcdc"/></linearGradient>
<linearGradient id="cyl" x1="0" y1="430" x2="0" y2="680" gradientUnits="userSpaceOnUse"><stop offset="0" stop-color="#a4a4a4"/><stop offset=".28" stop-color="#9a9a9a"/><stop offset=".44" stop-color="#878787"/><stop offset=".56" stop-color="#6a6a6a"/><stop offset=".70" stop-color="#383838"/><stop offset=".76" stop-color="#242424"/><stop offset="1" stop-color="#222"/></linearGradient>
<linearGradient id="cyls" x1="0" y1="445" x2="0" y2="590" gradientUnits="userSpaceOnUse"><stop offset="0" stop-color="#a8a8a8"/><stop offset=".3" stop-color="#7a7a7a"/><stop offset=".7" stop-color="#555"/><stop offset="1" stop-color="#2a2a2a"/></linearGradient>
<linearGradient id="hlg" x1="435" y1="0" x2="515" y2="0" gradientUnits="userSpaceOnUse"><stop offset="0" stop-color="#e8e8e8"/><stop offset=".5" stop-color="#fff"/><stop offset=".8" stop-color="#aaa"/><stop offset="1" stop-color="#222"/></linearGradient>
<linearGradient id="hlg2" x1="655" y1="0" x2="700" y2="0" gradientUnits="userSpaceOnUse"><stop offset="0" stop-color="#eee"/><stop offset=".5" stop-color="#fff"/><stop offset="1" stop-color="#555"/></linearGradient>
<linearGradient id="holeg" x1="712" y1="0" x2="748" y2="0" gradientUnits="userSpaceOnUse"><stop offset="0" stop-color="#ddd"/><stop offset=".6" stop-color="#666"/><stop offset="1" stop-color="#111"/></linearGradient>
</defs><g clip-path="url(#vp)"><rect x="235" y="116" width="1649" height="765" fill="url(#bg)"/><path d="M1038 116H1884V640L580 690L593 668z" fill="#2b422b"/><path d="M1457 116H1884V370L1526 384z" fill="#080a07"/><path d="M235 686L1884 621V881H235z" fill="#433a2c"/><path d="M302 774L1884 710V737L302 801z" fill="#0a0908"/><path d="M790 881L1884 835V862L1330 881z" fill="#0a0908"/><path d="M235 251L253 283L268 311L277 336L285 360L258 388L235 420z" fill="#9c9c9c" stroke="#555" stroke-width=".8"/><path d="M235 328L248 355L258 387L253 390L244 360L235 342z" fill="#333"/><path d="M277 337L361.5 333L323 382L373.6 380L335 428L235 432L235 420L258 388L285 360z" fill="#a8a8a8" stroke="#555" stroke-width=".8"/><path d="M361.5 333L379.6 345L384.4 367L381 400L392 452L330 456L335 428L373.6 380L323 382z" fill="#969696" stroke="#555" stroke-width=".8"/><path d="M373.6 380L381 400L392 452L335 452L335 428z" fill="#939393" stroke="#555" stroke-width=".8"/><path d="M235 432L334 428L331.5 466L235 469z" fill="#8e8e8e" stroke="#555" stroke-width=".8"/><path d="M235 469L331 466L314 502L235 505z" fill="#141414"/><path d="M235 491L320 488" stroke="#000" stroke-width="2"/><path d="M235 505L330 501L318 616L316.6 682L302 774L322 861L310 881H235z" fill="#9e9e9e" stroke="#555" stroke-width=".8"/><path d="M243 507C250 540 252 570 249 600C246 640 242 680 234 718" fill="none" stroke="#333" stroke-width="4.5"/><path d="M243 507C250 540 252 570 249 600C246 640 242 680 234 718" fill="none" stroke="#fff" stroke-width="2.6"/><path d="M284 504C290 540 291 580 290 630C289 690 280 740 265 772" fill="none" stroke="#333" stroke-width="4.5"/><path d="M284 504C290 540 291 580 290 630C289 690 280 740 265 772" fill="none" stroke="#fff" stroke-width="2.6"/><path d="M235 771.7L263 771.7L278.6 800.7L279.8 881H235z" fill="#a0a0a0" stroke="#555" stroke-width=".8"/><path d="M235 771.7L254 771.7L243 798.5L235 798.5z" fill="#ababab" stroke="#555" stroke-width=".6"/><path d="M235 798.5L243 798.5L244 881H235z" fill="#7a7a7a"/><path d="M301 778L279.8 841" stroke="#555" stroke-width=".8"/><path d="M318 610L600 610L600 668L317 684z" fill="#dcdcdc"/><path d="M349 453L435 450.6L512 448L567 444.6L652 441L891 432L891 653L700 660L655 664L600 664L520 669L362 675C330 640 309 600 309 550C309 500 325 465 349 453z" fill="url(#cyl)"/><path d="M362 675C330 640 309 600 309 550C309 500 325 465 349 453" fill="none" stroke="#3c3" stroke-width="1.2"/><path d="M434 449L507 447.7L500 470L435.6 470.6z" fill="url(#hlg)"/><path d="M433.2 453.7C431.8 461.7 424.6 483.4 424.8 501.9C425.0 520.4 429.2 546.0 434.4 564.5C439.6 583.0 447.2 598.1 456.0 612.6C464.8 627.1 476.6 642.0 487.4 651.2C498.2 660.4 509.8 668.0 521.0 668.0C532.2 668.0 549.2 654.0 554.8 651.2L554.8 647.5C550.7 647.4 539.2 647.2 530.0 647.0C520.8 646.8 509.8 651.2 499.5 646.3C489.2 641.4 477.4 630.2 468.2 617.4C458.9 604.6 450.0 586.1 444.0 569.3C438.0 552.4 433.4 532.8 432.0 516.3C430.6 499.8 435.0 478.2 435.6 470.6z" fill="#d6d6d6"/><path d="M433.2 453.7C431.8 461.7 424.6 483.4 424.8 501.9C425.0 520.4 429.2 546.0 434.4 564.5C439.6 583.0 447.2 598.1 456.0 612.6C464.8 627.1 476.6 642.0 487.4 651.2C498.2 660.4 509.8 668.0 521.0 668.0C532.2 668.0 549.2 654.0 554.8 651.2" fill="none" stroke="#333" stroke-width=".8"/><path d="M435.6 470.6C435.0 478.2 430.6 499.8 432.0 516.3C433.4 532.8 438.0 552.4 444.0 569.3C450.0 586.1 458.9 604.6 468.2 617.4C477.4 630.2 489.2 641.4 499.5 646.3C509.8 651.2 520.8 646.8 530.0 647.0C539.2 647.2 550.7 647.4 554.8 647.5" fill="none" stroke="#333" stroke-width=".6"/><path d="M506.7 447.7C505.5 456.3 498.7 480.0 499.5 499.5C500.3 519.0 505.5 544.9 511.5 564.5C517.5 584.1 526.8 603.4 535.6 617.4C544.4 631.4 554.9 640.8 564.5 648.8C574.1 656.8 588.6 662.8 593.4 665.6" fill="none" stroke="#333" stroke-width=".8"/><path d="M580 444L658.4 440.5C650 446 643 454 640 463L579 464.5z" fill="#e4e4e4"/><path d="M579 464.5L645 462" fill="none" stroke="#333" stroke-width=".6"/><path d="M595.8 463.3C594.7 461.1 591.6 453.2 589.0 450.0C586.4 446.8 583.2 442.3 580.0 444.0C576.8 445.7 572.6 452.0 570.0 460.0C567.4 468.0 565.0 478.8 564.5 492.2C564.0 505.6 563.3 522.3 566.9 540.4C570.5 558.5 578.5 584.5 586.1 600.6C593.7 616.7 601.4 626.5 612.6 636.7C623.9 646.9 646.8 657.8 653.6 662.0L654.8 642.7C649.0 640.9 630.2 639.4 620.0 632.0C609.8 624.6 601.0 613.5 593.4 598.2C585.8 582.9 577.7 558.1 574.1 540.4C570.5 522.7 570.9 504.8 571.7 492.2C572.5 479.6 577.8 469.1 579.0 464.5z" fill="#d6d6d6"/><path d="M595.8 463.3C594.7 461.1 591.6 453.2 589.0 450.0C586.4 446.8 583.2 442.3 580.0 444.0C576.8 445.7 572.6 452.0 570.0 460.0C567.4 468.0 565.0 478.8 564.5 492.2C564.0 505.6 563.3 522.3 566.9 540.4C570.5 558.5 578.5 584.5 586.1 600.6C593.7 616.7 601.4 626.5 612.6 636.7C623.9 646.9 646.8 657.8 653.6 662.0" fill="none" stroke="#333" stroke-width=".8"/><path d="M579.0 464.5C577.8 469.1 572.5 479.6 571.7 492.2C570.9 504.8 570.5 522.7 574.1 540.4C577.7 558.1 585.8 582.9 593.4 598.2C601.0 613.5 609.8 624.6 620.0 632.0C630.2 639.4 649.0 640.9 654.8 642.7" fill="none" stroke="#333" stroke-width=".6"/><path d="M654.8 642.7L700 641L709 656L654 662z" fill="url(#hlg2)"/><path d="M655 643V662" stroke="#333" stroke-width=".6"/><path d="M658.4 440.5C655.2 449.1 641.8 475.6 639.0 492.2C636.2 508.8 637.9 522.3 641.5 540.4C645.1 558.5 652.8 584.5 660.8 600.6C668.8 616.7 679.7 627.3 689.7 636.7C699.7 646.1 715.8 653.8 721.0 657.2" fill="none" stroke="#333" stroke-width=".8"/><path d="M712.6 468.2C716 462 727 459.7 740 459.7C749 461 750 470 746.3 475.4L718.6 482.6z" fill="url(#holeg)"/><path d="M712.6 468.2C711.0 476.2 704.2 500.2 703.0 516.3C701.8 532.3 702.3 546.4 705.3 564.5C708.3 582.6 714.8 610.2 721.0 624.7C727.2 639.2 735.9 645.8 742.7 651.2C749.5 656.6 757.2 657.6 762.0 657.2C766.8 656.8 770.0 650.2 771.6 648.8L768.0 645.0C767.0 644.2 766.2 641.7 762.0 640.3C757.8 638.9 748.7 640.5 742.7 636.7C736.7 632.9 730.8 629.4 725.8 617.4C720.8 605.4 715.0 581.4 712.6 564.5C710.2 547.6 710.4 529.9 711.4 516.3C712.4 502.6 717.4 488.2 718.6 482.6z" fill="#d6d6d6"/><path d="M712.6 468.2C711.0 476.2 704.2 500.2 703.0 516.3C701.8 532.3 702.3 546.4 705.3 564.5C708.3 582.6 714.8 610.2 721.0 624.7C727.2 639.2 735.9 645.8 742.7 651.2C749.5 656.6 757.2 657.6 762.0 657.2C766.8 656.8 770.0 650.2 771.6 648.8" fill="none" stroke="#333" stroke-width=".8"/><path d="M718.6 482.6C717.4 488.2 712.4 502.6 711.4 516.3C710.4 529.9 710.2 547.6 712.6 564.5C715.0 581.4 720.8 605.4 725.8 617.4C730.8 629.4 736.7 632.9 742.7 636.7C748.7 640.5 757.8 638.9 762.0 640.3C766.2 641.7 767.0 644.2 768.0 645.0" fill="none" stroke="#333" stroke-width=".6"/><path d="M746.3 475.4C745.3 482.2 741.2 501.4 740.2 516.3C739.2 531.1 738.2 548.5 740.2 564.5C742.2 580.5 748.3 599.8 752.3 612.6C756.3 625.4 760.7 635.1 764.3 641.5C767.9 647.9 771.4 648.8 774.0 651.2C776.6 653.6 779.0 655.2 780.0 656.0" fill="none" stroke="#333" stroke-width=".8"/><ellipse cx="898" cy="542" rx="44" ry="110.5" fill="#b6b6b6" stroke="#333" stroke-width=".8"/><path d="M874 502.7L901.8 469L948.7 467.8L948.7 501z" fill="#a9a9a9" stroke="#333" stroke-width=".8"/><path d="M874 502.7L948.7 501L948.7 574L875 576z" fill="#8a8a8a" stroke="#333" stroke-width=".8"/><path d="M875 576L904 614.6L975 611L948.7 574z" fill="#2b2b2b" stroke="#333" stroke-width=".8"/><path d="M948.7 573.7L992 590.5L975 611z" fill="#b4b4b4"/><path d="M956 447.3L1029 445L1049 588L975 589C960 580 951 560 950 518C948 490 947 470 956 447.3z" fill="url(#cyls)"/><path d="M949 467.8L1023 465M951 518L1024 516" stroke="#333" stroke-width=".6"/><path d="M958 447.3C949 460 947 490 951 518C953 540 955 560 958 564C962 575 968 585 975 589" fill="none" stroke="#f2c61a" stroke-width="2"/><path d="M1029.3 445C1040 458 1060 488 1067 508C1072 525 1071 560 1066 574C1061 586 1054 590 1049 589C1040 588 1032 575 1028 560C1023 540 1021 500 1021.5 475C1022 458 1025 447 1029.3 445z" fill="#c0c0c0" stroke="#a8e020" stroke-width="3"/><path d="M1029.3 445C1025 447 1022 458 1021.5 475C1021 500 1023 540 1028 560C1032 575 1040 588 1049 589" fill="none" stroke="#e8d020" stroke-width="1.2"/><ellipse cx="1048.6" cy="536" rx="48.2" ry="111" fill="none" stroke="#3bb03b" stroke-width="1"/><path d="M1049 535L1046 522M1049 535L1062 534M1049 535L1053 529" stroke-width="1.6" fill="none"/><path d="M1049 535L1046 521" stroke="#2020d0" stroke-width="1.8"/><path d="M1049 535L1063 535" stroke="#d02020" stroke-width="1.8"/><path d="M1049 535L1054 529" stroke="#20a020" stroke-width="1"/><path d="M1045 538L1050 534L1052 538z" fill="#111"/><path d="M1127 244L1145.4 538.6" stroke="#3f4fc8" stroke-width="4.2" stroke-linecap="round"/><path d="M1145.4 538.6L1244 347.6" stroke="#b2e02a" stroke-width="3.6" stroke-linecap="round"/><path d="M1145.6 539.7L1486 558.4" stroke="#e4232e" stroke-width="4.4" stroke-linecap="round"/><path d="M1055 259L1106 262L1067 289.6L1107 291" fill="none" stroke="#3f4fc8" stroke-width="3.8" stroke-linecap="round" stroke-linejoin="round"/><path d="M1275 345.5L1287.5 376.7L1308 346.7M1287.5 376.7L1281 404.8" fill="none" stroke="#b2e02a" stroke-width="3.6" stroke-linecap="round" stroke-linejoin="round"/><path d="M1444.7 581.5L1473.8 641.5M1434.4 628.4L1482.2 602" fill="none" stroke="#e4232e" stroke-width="4.2" stroke-linecap="round"/><path d="M235 205.6L329.4 204.8L342.4 202.2L600 202L641 203.2L648.2 208L648.2 208.0C653.8 209.2 668.3 213.3 681.9 215.3C695.5 217.3 715.6 217.8 730.0 220.0C744.4 222.2 757.3 225.9 768.5 228.5C779.7 231.1 785.4 232.5 797.4 235.7C809.4 238.9 829.5 244.4 840.8 247.8C852.0 251.2 853.3 251.2 864.9 256.2C876.5 261.2 899.4 273.1 910.6 277.9C921.8 282.7 926.3 282.1 932.3 285.1C938.3 288.1 942.3 291.4 946.7 296.0C951.1 300.6 956.4 307.2 958.8 312.8C961.2 318.4 958.4 324.1 961.2 329.7C964.0 335.3 969.6 338.9 975.6 346.5C981.6 354.1 991.7 366.6 997.3 375.4C1002.9 384.2 1006.5 392.3 1009.3 399.5C1012.1 406.7 1012.2 412.3 1014.2 418.7C1016.2 425.1 1020.2 434.8 1021.4 438.0" fill="none" stroke="#e01e28" stroke-width="3.3" stroke-linejoin="round" stroke-linecap="round"/><path d="M998.5 428.4L1021.4 439L1029.8 412.7" fill="none" stroke="#e01e28" stroke-width="3.2" stroke-linejoin="round" stroke-linecap="round"/><ellipse cx="267" cy="850" rx="13" ry="5" fill="#fff"/><path d="M261 826L270 848L264 850z" fill="#2030e0"/><path d="M268 847L291 847L268 852z" fill="#e02020"/><path d="M268 848L275 839" stroke="#20c020" stroke-width="2.2"/></g></svg><svg style="position:absolute;left:1844px;top:170px;overflow:visible" width="32" height="32" viewBox="0 0 32 32"><circle cx="16" cy="16" r="15.5" fill="#fff"/><circle cx="16" cy="16" r="12" fill="#c8c8c8"/><rect x="8" y="9" width="14" height="13" fill="none" stroke="#1f3f90" stroke-width="2" stroke-dasharray="2 1.5"/><path d="M15 16l10 10M25 16L15 26" stroke="#e03010" stroke-width="3"/></svg><div style="position:absolute;left:0px;top:133px;width:228px;height:391px;background:#f5e6a6;"></div><div style="position:absolute;left:2px;top:115px;width:226px;height:19px;background:linear-gradient(#a9c0dc,#98b3d3);"><div style="position:absolute;left:3px;top:3px;font-size:12px;color:#111;white-space:nowrap;line-height:1;">Útvary</div></div><div style="position:absolute;left:198px;top:118px;width:10px;height:12px;"><svg width="10" height="12" viewBox="0 0 10 12"><path d="M2 1h6v1H7v5h2v1H6v4H4V8H1V7h2V2H2z" fill="#222"/><rect x="4" y="2" width="1" height="5" fill="#fff"/></svg></div><div style="position:absolute;left:213px;top:119px;width:10px;height:10px;"><svg width="10" height="10" viewBox="0 0 10 10"><path d="M1 1l8 8M9 1L1 9" stroke="#222" stroke-width="1.6"/></svg></div><div style="position:absolute;left:3px;top:134px;width:223px;height:388px;background:#fff;border:1px solid #e8d48a;box-sizing:border-box;"></div><div style="position:absolute;left:4px;top:135px;width:221px;height:27px;background:linear-gradient(#f6f7f9,#e3e6eb);border-bottom:1px solid #d0d4da;box-sizing:border-box;"></div><svg style="position:absolute;left:8px;top:140px;overflow:visible" width="16" height="16" viewBox="0 0 16 16"><rect x="1" y="2" width="7" height="7" fill="#dde" stroke="#889" /><rect x="6" y="7" width="9" height="8" fill="#dde" stroke="#889"/></svg><svg style="position:absolute;left:32px;top:140px;overflow:visible" width="12" height="16" viewBox="0 0 12 16"><rect x="2" y="1" width="6" height="6" fill="#cde" stroke="#123a80"/><rect x="2" y="8" width="6" height="7" fill="#cde" stroke="#123a80"/></svg><svg style="position:absolute;left:52px;top:139px;overflow:visible" width="17" height="17" viewBox="0 0 17 17"><rect x="0" y="0" width="17" height="17" fill="#b5401a"/><path d="M4 4h9l-1 11H5z" fill="#9ac4e8" stroke="#335"/><rect x="3" y="3" width="11" height="2" fill="#cde"/></svg><div style="position:absolute;left:74px;top:141px;width:1px;height:14px;background:#c6cad0;"></div><svg style="position:absolute;left:82px;top:140px;overflow:visible" width="17" height="16" viewBox="0 0 17 16"><path d="M1 8l6-6 6 6-6 6z" fill="none" stroke="#222" stroke-width="1.5"/><path d="M6 9l4 4 7-11" fill="none" stroke="#2a5ab0" stroke-width="2"/></svg><svg style="position:absolute;left:104px;top:140px;overflow:visible" width="16" height="16" viewBox="0 0 16 16"><rect x="1" y="1" width="11" height="3" fill="#dde" stroke="#123a80"/><rect x="1" y="6" width="11" height="3" fill="#dde" stroke="#123a80"/><rect x="1" y="11" width="11" height="3" fill="#dde" stroke="#123a80"/><path d="M12 6l3 2-3 2z" fill="#123a80"/></svg><svg style="position:absolute;left:126px;top:140px;overflow:visible" width="16" height="16" viewBox="0 0 16 16"><path d="M1 8l6-6 6 6-6 6z" fill="#fff" stroke="#222" stroke-width="1.5"/><path d="M7 2v12l6-6z" fill="#2a5ab0"/></svg><svg style="position:absolute;left:150px;top:140px;overflow:visible" width="16" height="16" viewBox="0 0 16 16"><path d="M2 2v13M5 5v10" stroke="#889" stroke-width="1.4"/><rect x="7" y="7" width="7" height="8" fill="#eef" stroke="#889"/></svg><div style="position:absolute;left:173px;top:141px;font-size:13px;color:#8a8f98;white-space:nowrap;line-height:1;">#</div><svg style="position:absolute;left:195px;top:140px;overflow:visible" width="12" height="16" viewBox="0 0 12 16"><path d="M3 2v12M8 2v12" stroke="#889" stroke-width="1.4"/><path d="M1 12l2 3 2-3M6 4l2-3 2 3" fill="none" stroke="#889"/></svg><div style="position:absolute;left:211px;top:137px;width:14px;height:23px;background:linear-gradient(#fbd9a0,#f4b860);border:1px solid #e0a040;box-sizing:border-box;"><svg style="position:absolute;left:1px;top:6px;overflow:visible" width="12" height="16" viewBox="0 0 12 16"><rect x="1" y="6" width="8" height="8" fill="#cfe8f8" stroke="#112" stroke-width="1.4"/><path d="M6 3l5-2M6 3l5 2" stroke="#123" stroke-width="1"/></svg></div><div style="position:absolute;left:9px;top:169px;width:6px;height:6px;"><svg width="6" height="6" viewBox="0 0 6 6"><path d="M6 0V6H0z" fill="#333"/></svg></div><svg style="position:absolute;left:26px;top:163px;overflow:visible" width="16" height="18" viewBox="0 0 16 18"><path d="M2 8l6-3 6 3v6l-6 3-6-3z" fill="#7aa0d8" stroke="#345"/><path d="M6 1h4v7l-2 1-2-1z" fill="#4a6fa8"/><path d="M2 8l6 3 6-3" fill="none" stroke="#223"/></svg><div style="position:absolute;left:45px;top:167px;font-size:11.5px;color:#111;white-space:nowrap;line-height:1;letter-spacing:0.3px">4osy</div><div style="position:absolute;left:26px;top:187px;width:6px;height:6px;"><svg width="6" height="6" viewBox="0 0 6 6"><path d="M6 0V6H0z" fill="#333"/></svg></div><svg style="position:absolute;left:42px;top:181px;overflow:visible" width="16" height="16" viewBox="0 0 16 16"><circle cx="7.5" cy="8" r="6" fill="#fff" stroke="#222" stroke-width="1.5"/><path d="M7.5 8V2" stroke="#1a1" stroke-width="1.6"/><path d="M7.5 8h7" stroke="#d22" stroke-width="1.6"/><circle cx="7.5" cy="8" r="1.8" fill="#22c"/></svg><div style="position:absolute;left:62px;top:186px;font-size:11.5px;color:#111;white-space:nowrap;line-height:1;letter-spacing:-0.8px">CPL0</div><div style="position:absolute;left:56px;top:200px;width:169px;height:19px;background:#f2f9fe;border:2px solid #0f1f3a;box-sizing:border-box;"></div><svg style="position:absolute;left:58px;top:200px;overflow:visible" width="17" height="16" viewBox="0 0 17 16"><path d="M1 8c2-5 12-7 15-4v6c-3 4-13 5-15 2z" fill="#3a78c8" stroke="#1f4f9a"/><path d="M7 4l2 10M2 8l14-2" stroke="#cfe4fa" stroke-width="1.2"/></svg><div style="position:absolute;left:80px;top:205px;font-size:11.5px;color:#111;white-space:nowrap;line-height:1;">Řídící profil</div><svg style="position:absolute;left:41px;top:219px;overflow:visible" width="17" height="16" viewBox="0 0 17 16"><path d="M1 8c2-5 12-7 15-4v6c-3 4-13 5-15 2z" fill="#3a4a6a" stroke="#111"/><path d="M7 4l2 10M2 8l14-2" stroke="#dde" stroke-width="1.2"/></svg><div style="position:absolute;left:64px;top:224px;font-size:11.2px;color:#111;white-space:nowrap;line-height:1;">Plocha</div><svg style="position:absolute;left:26px;top:238px;overflow:visible" width="17" height="17" viewBox="0 0 17 17"><path d="M1 5l4-3 11 2v9l-4 3-11-2z" fill="#f8c860" stroke="#c89030"/><path d="M1 5l11 2 4-3M12 7v9" fill="none" stroke="#c89030"/></svg><div style="position:absolute;left:45px;top:242px;font-size:11.2px;color:#111;white-space:nowrap;line-height:1;">Polotovar</div><svg style="position:absolute;left:0px;top:190px;overflow:visible" width="240" height="40" viewBox="0 0 240 40"><path d="M56.7 10.8L64 5.6L94 4.6L98.3 7.2L113 9.3L133.8 9.8L148.3 10.3L149.4 16L148.3 24.4L143 28.5L128.5 31.7L98.3 32.7L69 31.7L60.8 24.4L56.7 16z" fill="none" stroke="#e01e28" stroke-width="3.2" stroke-linejoin="round"/><path d="M148 15.2L236 15.4" stroke="#e01e28" stroke-width="3"/></svg><div style="position:absolute;left:4px;top:504px;width:221px;height:17px;background:#ececec;border-top:1px solid #e0e0e0;box-sizing:border-box;"></div><svg style="position:absolute;left:9px;top:508px;overflow:visible" width="6" height="10" viewBox="0 0 6 10"><path d="M5 0v9L0 4.5z" fill="#444"/></svg><svg style="position:absolute;left:214px;top:508px;overflow:visible" width="6" height="10" viewBox="0 0 6 10"><path d="M0 0v9l5-4.5z" fill="#444"/></svg><div style="position:absolute;left:22px;top:505px;width:183px;height:15px;background:linear-gradient(#f4f4f4,#dcdcdc);border:1px solid #a8a8a8;border-radius:2px;box-sizing:border-box;"><div style="position:absolute;left:86px;top:4px;width:9px;height:6px;background:repeating-linear-gradient(90deg,#555 0 1px,transparent 1px 3px);"></div></div><div style="position:absolute;left:0px;top:523px;width:231px;height:28px;background:linear-gradient(#e3e6ea,#d0d4da);"></div><svg style="position:absolute;left:1px;top:523px" width="50" height="22" viewBox="0 0 50 22"><path d="M0.5 0.5L49.5 0.5L39 19Q38 21.5 35 21.5L12 21.5Q9 21.5 8 19z" fill="#eaf2fb" stroke="#b0b8c4" stroke-width="1"/></svg><svg style="position:absolute;left:17px;top:528px;overflow:visible" width="14" height="15" viewBox="0 0 14 15"><rect x="1" y="1" width="7" height="9" fill="#fff" stroke="#222"/><rect x="3" y="3" width="7" height="9" fill="#fff" stroke="#222"/><rect x="5" y="5" width="7" height="9" fill="#fff" stroke="#222"/></svg><div style="position:absolute;left:32px;top:529px;font-size:12px;color:#111;white-space:nowrap;line-height:1;">V...</div><svg style="position:absolute;left:44px;top:523px" width="52" height="22" viewBox="0 0 52 22"><path d="M0.5 0.5L51.5 0.5L41 19Q40 21.5 37 21.5L12 21.5Q9 21.5 8 19z" fill="#fbe896" stroke="#b0b8c4" stroke-width="1"/></svg><svg style="position:absolute;left:59px;top:529px;overflow:visible" width="14" height="13" viewBox="0 0 14 13"><rect x="1" y="3" width="9" height="8" fill="#7ab0d8" stroke="#112" stroke-width="1.3"/><path d="M1 3l2-2h9v8l-2 2" fill="#1f3f70" stroke="#112"/></svg><div style="position:absolute;left:74px;top:529px;font-size:12px;color:#111;white-space:nowrap;line-height:1;">Ú..</div><svg style="position:absolute;left:91px;top:523px" width="52" height="22" viewBox="0 0 52 22"><path d="M0.5 0.5L51.5 0.5L41 19Q40 21.5 37 21.5L12 21.5Q9 21.5 8 19z" fill="#f3b9b9" stroke="#b0b8c4" stroke-width="1"/></svg><svg style="position:absolute;left:98px;top:528px;overflow:visible" width="16" height="14" viewBox="0 0 16 14"><rect x="0" y="0" width="16" height="14" fill="#4a8ad0" stroke="#1f4f9a"/><rect x="2" y="3" width="7" height="7" fill="#aee"/><rect x="10" y="2" width="4" height="4" fill="#111"/></svg><div style="position:absolute;left:117px;top:529px;font-size:12px;color:#111;white-space:nowrap;line-height:1;">K...</div><svg style="position:absolute;left:134px;top:523px" width="52" height="22" viewBox="0 0 52 22"><path d="M0.5 0.5L51.5 0.5L41 19Q40 21.5 37 21.5L12 21.5Q9 21.5 8 19z" fill="#d6c4ee" stroke="#b0b8c4" stroke-width="1"/></svg><svg style="position:absolute;left:143px;top:528px;overflow:visible" width="14" height="15" viewBox="0 0 14 15"><rect x="1" y="1" width="10" height="12" fill="#bbb" stroke="#111" stroke-width="1.2"/><rect x="1" y="1" width="4" height="12" fill="#333"/></svg><div style="position:absolute;left:158px;top:529px;font-size:12px;color:#111;white-space:nowrap;line-height:1;">U..</div><svg style="position:absolute;left:176px;top:523px" width="52" height="22" viewBox="0 0 52 22"><path d="M0.5 0.5L51.5 0.5L41 19Q40 21.5 37 21.5L12 21.5Q9 21.5 8 19z" fill="#bfe0d4" stroke="#b0b8c4" stroke-width="1"/></svg><svg style="position:absolute;left:186px;top:527px;overflow:visible" width="12" height="15" viewBox="0 0 12 15"><rect x="1" y="1" width="9" height="13" fill="#fff" stroke="#111" stroke-width="1.2"/><path d="M3 4h5M3 6h5M3 8h5M3 10h5" stroke="#2236c8"/></svg><div style="position:absolute;left:200px;top:529px;font-size:12px;color:#111;white-space:nowrap;line-height:1;">P...</div><div style="position:absolute;left:0px;top:572px;width:228px;height:425px;background:#f5e6a6;"></div><div style="position:absolute;left:2px;top:552px;width:226px;height:20px;background:linear-gradient(#e4ebf4,#dbe4ef);"><div style="position:absolute;left:3px;top:4px;font-size:12px;color:#555c66;white-space:nowrap;line-height:1;">Informace</div></div><div style="position:absolute;left:198px;top:556px;width:10px;height:12px;"><svg width="10" height="12" viewBox="0 0 10 12"><path d="M2 1h6v1H7v5h2v1H6v4H4V8H1V7h2V2H2z" fill="#222"/><rect x="4" y="2" width="1" height="5" fill="#fff"/></svg></div><div style="position:absolute;left:213px;top:557px;width:10px;height:10px;"><svg width="10" height="10" viewBox="0 0 10 10"><path d="M1 1l8 8M9 1L1 9" stroke="#222" stroke-width="1.6"/></svg></div><div style="position:absolute;left:3px;top:573px;width:223px;height:424px;background:#fff;border:1px solid #e8d48a;box-sizing:border-box;overflow:hidden;"></div><svg style="position:absolute;left:5px;top:576px;overflow:visible" width="16" height="16" viewBox="0 0 16 16"><circle cx="8" cy="8" r="7.5" fill="#dfe8f5" stroke="#6a8ac0"/><circle cx="8" cy="8" r="6" fill="#4a78c0"/><circle cx="8" cy="4.5" r="1.2" fill="#fff"/><rect x="7" y="6.5" width="2" height="6" fill="#fff"/></svg><svg style="position:absolute;left:5px;top:712px;overflow:visible" width="16" height="16" viewBox="0 0 16 16"><path d="M2 2l12 12M2 2v4M2 2h4M14 14v-4M14 14h-4" stroke="#2030a0" stroke-width="1.2" fill="none"/></svg><svg style="position:absolute;left:5px;top:819px;overflow:visible" width="16" height="16" viewBox="0 0 16 16"><path d="M8 0.5L15.5 8L8 15.5L0.5 8z" fill="#f8e820" stroke="#8a8010"/><rect x="7.2" y="4" width="1.8" height="5" fill="#111"/><rect x="7.2" y="10" width="1.8" height="1.8" fill="#111"/></svg><svg style="position:absolute;left:5px;top:850px;overflow:visible" width="16" height="16" viewBox="0 0 16 16"><path d="M8 0.5L15.5 8L8 15.5L0.5 8z" fill="#f8e820" stroke="#8a8010"/><rect x="7.2" y="4" width="1.8" height="5" fill="#111"/><rect x="7.2" y="10" width="1.8" height="1.8" fill="#111"/></svg><svg style="position:absolute;left:5px;top:881px;overflow:visible" width="16" height="16" viewBox="0 0 16 16"><path d="M8 0.5L15.5 8L8 15.5L0.5 8z" fill="#f8e820" stroke="#8a8010"/><rect x="7.2" y="4" width="1.8" height="5" fill="#111"/><rect x="7.2" y="10" width="1.8" height="1.8" fill="#111"/></svg><div style="position:absolute;left:3px;top:573px;width:221px;height:405px;overflow:hidden;"><div style="position:absolute;left:24px;top:9px;font-size:11px;color:#111;white-space:nowrap;line-height:1;font-weight:bold;">Informace k prvkům</div><div style="position:absolute;left:2px;top:22px;font-size:11px;color:#111;white-space:nowrap;line-height:1;">Těleso: 63</div><div style="position:absolute;left:2px;top:35px;font-size:11px;color:#111;white-space:nowrap;line-height:1;">Vrstva: 4osy - 001&nbsp;&nbsp;Barva: Zlatá hříva(23)&nbsp;&nbsp;Typ</div><div style="position:absolute;left:2px;top:48px;font-size:11px;color:#111;white-space:nowrap;line-height:1;">Co-ordinate System : Pracovní CPL</div><div style="position:absolute;left:2px;top:61px;font-size:11px;color:#111;white-space:nowrap;line-height:1;">Rovinný Stěna</div><div style="position:absolute;left:2px;top:74px;font-size:11px;color:#111;white-space:nowrap;line-height:1;">Umístění :</div><div style="position:absolute;left:59px;top:74px;font-size:11px;color:#111;white-space:nowrap;line-height:1;">X</div><div style="position:absolute;left:85px;top:74px;font-size:11px;color:#111;white-space:nowrap;line-height:1;">0.000 Y</div><div style="position:absolute;left:137px;top:74px;font-size:11px;color:#111;white-space:nowrap;line-height:1;">-27.500 Z</div><div style="position:absolute;left:202px;top:74px;font-size:11px;color:#111;white-space:nowrap;line-height:1;">0.00</div><div style="position:absolute;left:2px;top:87px;font-size:11px;color:#111;white-space:nowrap;line-height:1;">Normála :</div><div style="position:absolute;left:59px;top:87px;font-size:11px;color:#111;white-space:nowrap;line-height:1;">X</div><div style="position:absolute;left:82px;top:87px;font-size:11px;color:#111;white-space:nowrap;line-height:1;">-1.000 Y</div><div style="position:absolute;left:141px;top:87px;font-size:11px;color:#111;white-space:nowrap;line-height:1;">0.000 Z</div><div style="position:absolute;left:195px;top:87px;font-size:11px;color:#111;white-space:nowrap;line-height:1;">-0.00</div><div style="position:absolute;left:2px;top:100px;font-size:11px;color:#111;white-space:nowrap;line-height:1;">RGB: 12632256 (192, 192, 192)</div><div style="position:absolute;left:2px;top:113px;font-size:11px;color:#111;white-space:nowrap;line-height:1;">Je nezávislý</div><div style="position:absolute;left:24px;top:144px;font-size:11px;color:#111;white-space:nowrap;line-height:1;font-weight:bold;">Vzdálenost</div><div style="position:absolute;left:2px;top:157px;font-size:11px;color:#111;white-space:nowrap;line-height:1;">První bod</div><div style="position:absolute;left:75px;top:157px;font-size:11px;color:#111;white-space:nowrap;line-height:1;">: X</div><div style="position:absolute;left:108px;top:157px;font-size:11px;color:#111;white-space:nowrap;line-height:1;">0.000 Y</div><div style="position:absolute;left:161px;top:157px;font-size:11px;color:#111;white-space:nowrap;line-height:1;">27.500 Z</div><div style="position:absolute;left:2px;top:170px;font-size:11px;color:#111;white-space:nowrap;line-height:1;">Druhý bod</div><div style="position:absolute;left:81px;top:170px;font-size:11px;color:#111;white-space:nowrap;line-height:1;">: X</div><div style="position:absolute;left:108px;top:170px;font-size:11px;color:#111;white-space:nowrap;line-height:1;">190.000 Y</div><div style="position:absolute;left:170px;top:170px;font-size:11px;color:#111;white-space:nowrap;line-height:1;">-11.456 Z</div><div style="position:absolute;left:2px;top:183px;font-size:11px;color:#111;white-space:nowrap;line-height:1;">Vzdálenost</div><div style="position:absolute;left:80px;top:183px;font-size:11px;color:#111;white-space:nowrap;line-height:1;">: X</div><div style="position:absolute;left:107px;top:183px;font-size:11px;color:#111;white-space:nowrap;line-height:1;">190.000 Y</div><div style="position:absolute;left:169px;top:183px;font-size:11px;color:#111;white-space:nowrap;line-height:1;">-38.956 Z</div><div style="position:absolute;left:2px;top:196px;font-size:11px;color:#111;white-space:nowrap;line-height:1;">Vzdálenost v rovině:&nbsp;&nbsp;193.953</div><div style="position:absolute;left:2px;top:209px;font-size:11px;color:#111;white-space:nowrap;line-height:1;">Vzdálenost v prostoru:&nbsp;&nbsp;194.017</div><div style="position:absolute;left:2px;top:222px;font-size:11px;color:#111;white-space:nowrap;line-height:1;">Co-ordinate System : Pracovní CPL</div><div style="position:absolute;left:24px;top:253px;font-size:11px;color:#111;white-space:nowrap;line-height:1;font-weight:bold;">Upozornění: uživatelsky definovaný p</div><div style="position:absolute;left:2px;top:266px;font-size:11px;color:#111;white-space:nowrap;line-height:1;">Počátek CPL stroje nebude automaticky um</div><div style="position:absolute;left:24px;top:284px;font-size:11px;color:#111;white-space:nowrap;line-height:1;font-weight:bold;">Upozornění: uživatelsky definovaný p</div><div style="position:absolute;left:2px;top:297px;font-size:11px;color:#111;white-space:nowrap;line-height:1;">Počátek CPL stroje nebude automaticky um</div><div style="position:absolute;left:24px;top:315px;font-size:11px;color:#111;white-space:nowrap;line-height:1;font-weight:bold;">Upozornění: uživatelsky definovaný p</div><div style="position:absolute;left:2px;top:328px;font-size:11px;color:#111;white-space:nowrap;line-height:1;">Počátek CPL stroje nebude automaticky um</div></div><div style="position:absolute;left:4px;top:978px;width:221px;height:18px;background:#ececec;"></div><svg style="position:absolute;left:9px;top:982px;overflow:visible" width="6" height="10" viewBox="0 0 6 10"><path d="M5 0v9L0 4.5z" fill="#444"/></svg><svg style="position:absolute;left:214px;top:982px;overflow:visible" width="6" height="10" viewBox="0 0 6 10"><path d="M0 0v9l5-4.5z" fill="#444"/></svg><div style="position:absolute;left:26px;top:979px;width:16px;height:16px;background:linear-gradient(#f4f4f4,#dcdcdc);border:1px solid #a8a8a8;border-radius:2px;box-sizing:border-box;"></div><div style="position:absolute;left:0px;top:997px;width:231px;height:24px;background:linear-gradient(#e3e6ea,#d0d4da);"></div><svg style="position:absolute;left:3px;top:997px" width="74" height="22" viewBox="0 0 74 22"><path d="M0.5 0.5L73.5 0.5L63 19Q62 21.5 59 21.5L12 21.5Q9 21.5 8 19z" fill="#e4eef9" stroke="#b0b8c4" stroke-width="1"/></svg><svg style="position:absolute;left:14px;top:1000px;overflow:visible" width="15" height="16" viewBox="0 0 15 16"><rect x="1" y="3" width="13" height="12" fill="#fff" stroke="#3a78c8"/><rect x="1" y="3" width="13" height="3" fill="#3a78c8"/><path d="M8 1l6 2-3 3z" fill="#f0c040"/></svg><div style="position:absolute;left:32px;top:1003px;font-size:12px;color:#111;white-space:nowrap;line-height:1;">Vlastn...</div><svg style="position:absolute;left:73px;top:997px" width="78" height="22" viewBox="0 0 78 22"><path d="M0.5 0.5L77.5 0.5L67 19Q66 21.5 63 21.5L12 21.5Q9 21.5 8 19z" fill="#fbe896" stroke="#b0b8c4" stroke-width="1"/></svg><svg style="position:absolute;left:86px;top:1000px;overflow:visible" width="16" height="16" viewBox="0 0 16 16"><path d="M8 2c4 0 7 2 7 5s-3 5-7 5l-3 3v-3c-2-1-4-3-4-5 0-3 3-5 7-5z" fill="#fff" stroke="#222"/></svg><div style="position:absolute;left:103px;top:1003px;font-size:12px;color:#111;white-space:nowrap;line-height:1;">Inform...</div><svg style="position:absolute;left:146px;top:997px" width="78" height="22" viewBox="0 0 78 22"><path d="M0.5 0.5L77.5 0.5L67 19Q66 21.5 63 21.5L12 21.5Q9 21.5 8 19z" fill="#d8ecc4" stroke="#b0b8c4" stroke-width="1"/></svg><svg style="position:absolute;left:154px;top:1002px;overflow:visible" width="16" height="14" viewBox="0 0 16 14"><path d="M1 6l6-4 9 3-6 4z" fill="#fff" stroke="#222"/><path d="M1 6v3l9 4 6-5V5" fill="#ddd" stroke="#222"/></svg><div style="position:absolute;left:173px;top:1003px;font-size:12px;color:#111;white-space:nowrap;line-height:1;">Náhled</div><div style="position:absolute;left:233px;top:881px;width:1653px;height:21px;background:#efefef;"></div><div style="position:absolute;left:234px;top:881px;width:101px;height:19px;background:#9ab5d6;"><div style="position:absolute;left:2px;top:2px;font-size:11px;color:#111;white-space:nowrap;line-height:1;">Dynamický 2.02</div></div><svg style="position:absolute;left:1843px;top:884px;overflow:visible" width="41" height="11" viewBox="0 0 41 11"><rect x=".5" y=".5" width="11" height="9" fill="#fff" stroke="#111"/><path d="M1 5h10" stroke="#111" stroke-width="1.5"/><rect x="12.5" y=".5" width="11" height="9" fill="#fff" stroke="#111"/><path d="M18 1v8" stroke="#111" stroke-width="1.5"/><rect x="28.5" y=".5" width="11" height="9" fill="#ddd" stroke="#999"/><path d="M30 2l8 6M38 2l-8 6" stroke="#999" stroke-width="1.2"/></svg><div style="position:absolute;left:233px;top:902px;width:1653px;height:5px;background:#d6d9df;"></div><div style="position:absolute;left:232px;top:907px;width:1653px;height:21px;background:linear-gradient(#c9daee,#dde8f5 75%,#f6f8fa);"><div style="position:absolute;left:5px;top:5px;font-size:12px;color:#555c66;white-space:nowrap;line-height:1;">Simulace</div></div><div style="position:absolute;left:1856px;top:911px;width:10px;height:12px;"><svg width="10" height="12" viewBox="0 0 10 12"><path d="M2 1h6v1H7v5h2v1H6v4H4V8H1V7h2V2H2z" fill="#222"/><rect x="4" y="2" width="1" height="5" fill="#fff"/></svg></div><div style="position:absolute;left:1872px;top:912px;width:10px;height:10px;"><svg width="10" height="10" viewBox="0 0 10 10"><path d="M1 1l8 8M9 1L1 9" stroke="#222" stroke-width="1.6"/></svg></div><div style="position:absolute;left:232px;top:928px;width:1652px;height:69px;background:#f0f0f0;border:1px solid #c4d2e4;border-top:1px solid #f4f6f8;border-bottom:2px solid #5e646c;box-sizing:border-box;"></div><div style="position:absolute;left:246px;top:936px;width:1488px;height:12px;background:#e6e8e8;border:1px solid #cfd2d4;border-top:2px solid #c0c3c6;box-sizing:border-box;"></div><svg style="position:absolute;left:246px;top:932px;overflow:visible" width="10" height="20" viewBox="0 0 10 20"><path d="M1 5L5 1L9 5V19H1z" fill="#f6f6f6" stroke="#b0b0b0"/></svg><div style="position:absolute;left:1743px;top:931px;width:19px;height:21px;background:#f0f0f0;border:1px solid #c8c8c8;border-radius:3px;box-sizing:border-box;"><svg style="position:absolute;left:5px;top:6px;overflow:visible" width="8" height="8" viewBox="0 0 8 8"><rect width="8" height="8" fill="#999"/></svg></div><div style="position:absolute;left:1767px;top:931px;width:22px;height:21px;background:#f0f0f0;border:1px solid #c8c8c8;border-radius:3px;box-sizing:border-box;"><svg style="position:absolute;left:4px;top:5px;overflow:visible" width="14" height="11" viewBox="0 0 14 11"><path d="M0 0h2v11H0zM8 0v11L2 5.5zM14 0v11L8 5.5z" fill="#999"/></svg></div><div style="position:absolute;left:1791px;top:931px;width:19px;height:21px;background:linear-gradient(#f8f8f8,#d8d8d8);border:1px solid #555;border-radius:3px;box-sizing:border-box;"><svg style="position:absolute;left:6px;top:5px;overflow:visible" width="6" height="11" viewBox="0 0 6 11"><path d="M6 0v11L0 5.5z" fill="#000a80"/></svg></div><div style="position:absolute;left:1812px;top:931px;width:19px;height:21px;background:linear-gradient(#f8f8f8,#d8d8d8);border:1px solid #555;border-radius:3px;box-sizing:border-box;"><svg style="position:absolute;left:7px;top:5px;overflow:visible" width="6" height="11" viewBox="0 0 6 11"><path d="M0 0v11l6-5.5z" fill="#000a80"/></svg></div><div style="position:absolute;left:1834px;top:931px;width:22px;height:21px;background:#f0f0f0;border:1px solid #c8c8c8;border-radius:3px;box-sizing:border-box;"><svg style="position:absolute;left:4px;top:5px;overflow:visible" width="14" height="11" viewBox="0 0 14 11"><path d="M0 0v11l6-5.5zM6 0v11l6-5.5zM12 0h2v11h-2z" fill="#999"/></svg></div><div style="position:absolute;left:1863px;top:931px;width:19px;height:21px;background:#f0f0f0;border:1px solid #c8c8c8;border-radius:3px;box-sizing:border-box;"><svg style="position:absolute;left:3px;top:4px;overflow:visible" width="13" height="13" viewBox="0 0 13 13"><circle cx="5" cy="5" r="4" fill="none" stroke="#999" stroke-width="1.3"/><path d="M8 8l4 4" stroke="#999" stroke-width="1.8"/></svg></div><div style="position:absolute;left:246px;top:957px;width:117px;height:21px;background:linear-gradient(#f2f2f2,#dcdcdc);border:1px solid #707070;border-radius:2px;box-sizing:border-box;"><svg style="position:absolute;left:4px;top:3px;overflow:visible" width="12" height="12" viewBox="0 0 12 12"><circle cx="6" cy="6" r="5.2" fill="#fff" stroke="#111" stroke-width="1.4"/><path d="M6 2v4" stroke="#111" stroke-width="1.4"/></svg><div style="position:absolute;left:17px;top:4px;font-size:11px;color:#111;white-space:nowrap;line-height:1;letter-spacing:-0.25px">Konstantní rychlost</div></div><div style="position:absolute;left:387px;top:968px;width:1299px;height:1px;background:#a0a0a0;border-bottom:1px solid #fff;"></div><div style="position:absolute;left:475px;top:963px;width:4px;height:11px;background:#e8e8e8;border:1px solid #888;box-sizing:border-box;"></div><div style="position:absolute;left:1693px;top:957px;width:15px;height:10px;background:#f4f4f4;border:1px solid #c8ccd4;box-sizing:border-box;"><svg style="position:absolute;left:4px;top:2px;overflow:visible" width="7" height="5" viewBox="0 0 7 5"><path d="M0 4l3.5-4 3.5 4z" fill="#6870a8"/></svg></div><div style="position:absolute;left:1693px;top:968px;width:15px;height:10px;background:#f4f4f4;border:1px solid #c8ccd4;box-sizing:border-box;"><svg style="position:absolute;left:4px;top:3px;overflow:visible" width="7" height="5" viewBox="0 0 7 5"><path d="M0 0l3.5 4 3.5-4z" fill="#6870a8"/></svg></div><div style="position:absolute;left:1710px;top:957px;width:24px;height:21px;background:#f2f2f2;border:1px solid #dcdcdc;box-sizing:border-box;"><div style="position:absolute;left:4px;top:3px;font-size:13px;color:#000;white-space:nowrap;line-height:1;">1</div></div><div style="position:absolute;left:232px;top:997px;width:1654px;height:24px;background:linear-gradient(#e8eaee,#d4d8de);"></div><svg style="position:absolute;left:236px;top:997px" width="82" height="22" viewBox="0 0 82 22"><path d="M0.5 0.5L81.5 0.5L71 19Q70 21.5 67 21.5L12 21.5Q9 21.5 8 19z" fill="#e4eef9" stroke="#b0b8c4" stroke-width="1"/></svg><svg style="position:absolute;left:251px;top:1001px;overflow:visible" width="7" height="11" viewBox="0 0 7 11"><path d="M0 0v11l7-5.5z" fill="#0010c0"/></svg><div style="position:absolute;left:265px;top:1003px;font-size:11px;color:#111;white-space:nowrap;line-height:1;">Simulace</div><svg style="position:absolute;left:315px;top:997px" width="94" height="22" viewBox="0 0 94 22"><path d="M0.5 0.5L93.5 0.5L83 19Q82 21.5 79 21.5L12 21.5Q9 21.5 8 19z" fill="#fbe896" stroke="#b0b8c4" stroke-width="1"/></svg><svg style="position:absolute;left:320px;top:1002px;overflow:visible" width="16" height="14" viewBox="0 0 16 14"><path d="M1 6l6-4 9 3-6 4z" fill="#fff" stroke="#222"/><path d="M1 6v3l9 4 6-5V5" fill="#ddd" stroke="#222"/></svg><div style="position:absolute;left:339px;top:1003px;font-size:11.5px;color:#111;white-space:nowrap;line-height:1;">Souřadnice</div><div style="position:absolute;left:0px;top:1021px;width:1920px;height:19px;background:linear-gradient(#e2e4e8,#cdd0d6);border-top:1px solid #c8ccd2;box-sizing:border-box;"><div style="position:absolute;left:4px;top:5px;font-size:11.3px;color:#333;white-space:nowrap;line-height:1;">Připraven</div></div><div style="position:absolute;left:1611px;top:1023px;width:51px;height:17px;border-left:1px solid #b8bcc2;border-right:1px solid #fff;box-sizing:border-box;overflow:hidden;"><div style="position:absolute;left:2px;top:3px;font-size:11px;color:#a4a8ae;white-space:nowrap;line-height:1;letter-spacing:-0.3px">SNÍMÁNÍ</div></div><div style="position:absolute;left:1662px;top:1023px;width:76px;height:17px;border-left:1px solid #b8bcc2;border-right:1px solid #fff;box-sizing:border-box;overflow:hidden;"><div style="position:absolute;left:2px;top:3px;font-size:11px;color:#a4a8ae;white-space:nowrap;line-height:1;letter-spacing:-0.3px">OZNAČOVÁNÍ</div></div><div style="position:absolute;left:1739px;top:1023px;width:45px;height:17px;border-left:1px solid #b8bcc2;border-right:1px solid #fff;box-sizing:border-box;overflow:hidden;"><div style="position:absolute;left:2px;top:3px;font-size:11px;color:#a4a8ae;white-space:nowrap;line-height:1;letter-spacing:-0.3px">MŘÍŽKA</div></div><div style="position:absolute;left:1785px;top:1023px;width:43px;height:17px;border-left:1px solid #b8bcc2;border-right:1px solid #fff;box-sizing:border-box;overflow:hidden;"><div style="position:absolute;left:2px;top:3px;font-size:11px;color:#a4a8ae;white-space:nowrap;line-height:1;letter-spacing:-0.3px">Vkládat</div></div><div style="position:absolute;left:1829px;top:1023px;width:48px;height:17px;border-left:1px solid #b8bcc2;border-right:1px solid #fff;box-sizing:border-box;overflow:hidden;"><div style="position:absolute;left:2px;top:3px;font-size:11px;color:#a4a8ae;white-space:nowrap;line-height:1;letter-spacing:-0.3px">Poloměr</div></div><div style="position:absolute;left:1877px;top:1023px;width:18px;height:17px;border-left:1px solid #b8bcc2;border-right:1px solid #fff;box-sizing:border-box;overflow:hidden;"><div style="position:absolute;left:2px;top:3px;font-size:11px;color:#333;white-space:nowrap;line-height:1;letter-spacing:-0.3px">XY</div></div><div style="position:absolute;left:1896px;top:1023px;width:23px;height:17px;border-left:1px solid #b8bcc2;border-right:1px solid #fff;box-sizing:border-box;overflow:hidden;"><div style="position:absolute;left:2px;top:3px;font-size:11px;color:#333;white-space:nowrap;line-height:1;letter-spacing:-0.3px">mm</div></div><div style="position:absolute;left:0px;top:1040px;width:1920px;height:40px;background:linear-gradient(90deg,#262c31,#2a3234 18%,#34403e 36%,#3a4644 48%,#33403d 58%,#24302e 66%,#141a1e 72%,#0f1317 85%,#13171b);border-top:1px solid #0a0c0e;box-sizing:border-box;"></div><div style="position:absolute;left:0px;top:1041px;width:1920px;height:20px;background:linear-gradient(rgba(255,255,255,.10),rgba(255,255,255,.02));"></div><svg style="position:absolute;left:7px;top:1041px;overflow:visible" width="40" height="40" viewBox="0 0 40 40"><defs><radialGradient id="orb" cx="50%" cy="40%" r="60%"><stop offset="0" stop-color="#7ac8f0"/><stop offset=".6" stop-color="#2a78b8"/><stop offset="1" stop-color="#0c3a68"/></radialGradient></defs><circle cx="20" cy="19" r="18" fill="url(#orb)" stroke="#6ab0e0" stroke-width="1"/><path d="M11 12c3-2 6-2 8 0v7c-2-2-5-2-8 0z" fill="#f05020"/><path d="M21 12c3 2 6 2 8 0v7c-2 2-5 2-8 0z" fill="#80c020"/><path d="M11 21c3-2 6-2 8 0v7c-2-2-5-2-8 0z" fill="#1890f0"/><path d="M21 21c3 2 6 2 8 0v7c-2 2-5 2-8 0z" fill="#f8c020"/></svg><div style="position:absolute;left:60px;top:1042px;width:50px;height:37px;background:linear-gradient(rgba(255,255,255,.32),rgba(255,255,255,.14));border:1px solid rgba(0,0,0,.6);border-radius:3px;box-shadow:inset 0 0 0 1px rgba(255,255,255,.25);box-sizing:border-box;"></div><svg style="position:absolute;left:70px;top:1045px;overflow:visible" width="32" height="32" viewBox="0 0 32 32"><ellipse cx="16" cy="16" rx="15" ry="9" fill="none" stroke="#f0c020" stroke-width="2.5" transform="rotate(-30 16 16)"/><circle cx="16" cy="16" r="10" fill="#3aa0e8"/><path d="M8 16h16M9 16c0-5 4-8 7-8 4 0 7 3 7 7" fill="none" stroke="#fff" stroke-width="3.5"/><path d="M10 18c1 5 8 7 12 3" fill="none" stroke="#fff" stroke-width="3.5"/></svg><div style="position:absolute;left:112px;top:1043px;width:2px;height:35px;background:rgba(255,255,255,.15);"></div><svg style="position:absolute;left:134px;top:1046px;overflow:visible" width="32" height="30" viewBox="0 0 32 30"><path d="M1 6h10l2 2h16v20H1z" fill="#e8c868"/><path d="M1 12h28v16H1z" fill="#f8e4a0" stroke="#c8a050"/><rect x="4" y="4" width="4" height="3" fill="#3c3"/><rect x="12" y="6" width="4" height="3" fill="#c33"/><rect x="19" y="8" width="4" height="3" fill="#36c"/><path d="M6 18h18v10h-4v-6H10v6H6z" fill="#8ac8f0"/></svg><svg style="position:absolute;left:198px;top:1046px;overflow:visible" width="30" height="30" viewBox="0 0 30 30"><rect x="3" y="3" width="24" height="24" fill="#7ab8e8"/><rect x="1" y="1" width="24" height="26" fill="#5aa0d8" stroke="#3a80b8"/><circle cx="13" cy="14" r="9" fill="#f07818"/><path d="M10 9v10l8-5z" fill="#fff"/></svg><div style="position:absolute;left:246px;top:1042px;width:54px;height:37px;background:linear-gradient(rgba(255,255,255,.62),rgba(255,255,255,.38));border:1px solid rgba(0,0,0,.6);border-radius:3px;box-shadow:inset 0 0 0 1px rgba(255,255,255,.25);box-sizing:border-box;"></div><svg style="position:absolute;left:257px;top:1044px;overflow:visible" width="30" height="32" viewBox="0 0 30 32"><rect x="0" y="0" width="30" height="32" rx="2" fill="#f4f4f4"/><circle cx="15" cy="17" r="8" fill="none" stroke="#8a8a82" stroke-width="5"/><rect x="7" y="15" width="15" height="4" fill="#8a8a82"/><rect x="16" y="21" width="10" height="5" fill="#f4f4f4"/><circle cx="9" cy="8" r="2.5" fill="#3c3"/></svg><div style="position:absolute;left:301px;top:1043px;width:2px;height:35px;background:rgba(255,255,255,.15);"></div><div style="position:absolute;left:308px;top:1042px;width:58px;height:37px;background:linear-gradient(rgba(255,255,255,.32),rgba(255,255,255,.14));border:1px solid rgba(0,0,0,.6);border-radius:3px;box-shadow:inset 0 0 0 1px rgba(255,255,255,.25);box-sizing:border-box;"></div><svg style="position:absolute;left:320px;top:1045px;overflow:visible" width="34" height="34" viewBox="0 0 34 34"><ellipse cx="14" cy="19" rx="13" ry="10" fill="#dde8f0" stroke="#9ab" transform="rotate(-20 14 19)"/><circle cx="8" cy="18" r="2.5" fill="#e03030"/><circle cx="12" cy="13" r="2.5" fill="#40b040"/><circle cx="18" cy="12" r="2.5" fill="#f0c020"/><circle cx="15" cy="22" r="2.5" fill="#3050c0"/><path d="M16 32L30 4" stroke="#e8a040" stroke-width="3"/><path d="M28 1l4 5-3 2z" fill="#f08020"/></svg><div style="position:absolute;left:1694px;top:1052px;font-size:12px;color:#fff;white-space:nowrap;line-height:1;">CS</div><svg style="position:absolute;left:1725px;top:1056px;overflow:visible" width="10" height="7" viewBox="0 0 10 7"><path d="M0 6l5-5 5 5z" fill="#fff"/></svg><svg style="position:absolute;left:1747px;top:1050px;overflow:visible" width="16" height="18" viewBox="0 0 16 18"><path d="M1 0v18" stroke="#fff" stroke-width="1.5"/><path d="M2 1h6l2 2h5v7h-6l-2-2H2z" fill="#fff"/></svg><svg style="position:absolute;left:1770px;top:1050px;overflow:visible" width="16" height="18" viewBox="0 0 16 18"><rect x="2" y="3" width="10" height="14" fill="none" stroke="#fff" stroke-width="1.5"/><rect x="7" y="6" width="8" height="9" fill="#fff"/><path d="M9 3v3M13 3v3" stroke="#fff" stroke-width="1.5"/></svg><svg style="position:absolute;left:1795px;top:1052px;overflow:visible" width="16" height="16" viewBox="0 0 16 16"><path d="M1 15h3v-3H1zM5 15h3V9H5zM9 15h3V6H9zM13 15h3V2h-3z" fill="#fff"/></svg><svg style="position:absolute;left:1818px;top:1051px;overflow:visible" width="16" height="18" viewBox="0 0 16 18"><path d="M1 6h4l5-5v16l-5-5H1z" fill="#fff"/><path d="M12 5c2 2 2 6 0 8M14 3c3 3 3 9 0 12" fill="none" stroke="#fff" stroke-width="1.3"/></svg><div style="position:absolute;left:1859px;top:1048px;font-size:12px;color:#fff;white-space:nowrap;line-height:1;">17:38</div><div style="position:absolute;left:1846px;top:1064px;font-size:12px;color:#fff;white-space:nowrap;line-height:1;letter-spacing:-0.3px">30.10.2013</div><div style="position:absolute;left:1906px;top:1042px;width:13px;height:38px;background:linear-gradient(90deg,rgba(255,255,255,.12),rgba(255,255,255,.25));border-left:1px solid rgba(0,0,0,.6);box-sizing:border-box;"></div><div style="position:absolute;left:1886px;top:182px;width:33px;height:420px;background:linear-gradient(90deg,#eef0f4,#dfe3ea);border:1px solid #c6cbd3;border-radius:3px;box-sizing:border-box;"></div><div style="position:absolute;left:1891px;top:187px;width:22px;height:2px;background:repeating-linear-gradient(90deg,#9aa0aa 0 2px,transparent 2px 4px);"></div><svg style="position:absolute;left:1891px;top:194px;overflow:visible" width="24" height="24" viewBox="0 0 24 24"><path d="M1 10l11-6 11 6v6l-11 6-11-6z" fill="#8ab0e8" stroke="#1f3f90"/><path d="M1 10l11-6 11 6-11 6z" fill="#e4eefc" stroke="#1f3f90"/><path d="M4 9l11 5M7 7l11 5M10 5.5l10 5" stroke="#c02030" stroke-width="1.2"/></svg><svg style="position:absolute;left:1891px;top:224px;overflow:visible" width="24" height="24" viewBox="0 0 24 24"><path d="M1 14l11-5 11 5v5l-11 5-11-5z" fill="#8ab0e8" stroke="#1f3f90"/><path d="M1 14l11-5 11 5-11 5z" fill="#e4eefc" stroke="#1f3f90"/><path d="M7 6l5-3 5 3v7l-5 3-5-3z" fill="#7ab0f0" stroke="#1f3f90"/><ellipse cx="12" cy="8" rx="11" ry="3" fill="none" stroke="#c02030" stroke-width="1.2"/><ellipse cx="12" cy="12" rx="11" ry="3" fill="none" stroke="#c02030" stroke-width="1.2"/></svg><svg style="position:absolute;left:1891px;top:254px;overflow:visible" width="24" height="24" viewBox="0 0 24 24"><path d="M1 17l9-6 13 4v4l-9 5-13-4z" fill="#aabcd8" stroke="#222"/><path d="M10 15h4v5h-4z" fill="#333"/><path d="M5 1h6v12l-3 3-3-3z" fill="#e8b820" stroke="#7a5a10"/><path d="M5 5l6-2M5 9l6-2" stroke="#7a5a10"/></svg><svg style="position:absolute;left:1891px;top:294px;overflow:visible" width="24" height="24" viewBox="0 0 24 24"><path d="M1 15l11-5 11 5v4l-11 5-11-5z" fill="#8ab0e8" stroke="#1f3f90"/><path d="M1 15l11-5 11 5-11 5z" fill="#e4eefc" stroke="#1f3f90"/><path d="M7 6l5-3 5 3v7l-5 3-5-3z" fill="#c8a8d8" stroke="#1f3f90"/><path d="M7 6l5 3 5-3M12 9v7" fill="none" stroke="#c02030"/></svg><svg style="position:absolute;left:1891px;top:322px;overflow:visible" width="24" height="24" viewBox="0 0 24 24"><path d="M1 10l11-6 11 6v6l-11 6-11-6z" fill="#8ab0e8" stroke="#1f3f90"/><path d="M1 10l11-6 11 6-11 6z" fill="#e4eefc" stroke="#1f3f90"/><path d="M4 10l8-4 8 4-8 4zM7 10l5-2.5 5 2.5-5 2.5z" fill="none" stroke="#c02030" stroke-width="1.1"/></svg><svg style="position:absolute;left:1891px;top:353px;overflow:visible" width="24" height="24" viewBox="0 0 24 24"><path d="M1 15l9-5 13 5v4l-9 5-13-5z" fill="#b8c8e0" stroke="#222"/><path d="M6 1h7v13l-3 3-4-3z" fill="#e8b820" stroke="#7a5a10"/><path d="M6 5l7-2M6 9l7-2" stroke="#7a5a10"/></svg><svg style="position:absolute;left:1891px;top:382px;overflow:visible" width="24" height="24" viewBox="0 0 24 24"><path d="M2 1h6v18l-3 4-3-4z" fill="#e8c030" stroke="#7a5a10"/><path d="M2 6l6-3M2 11l6-3M2 16l6-3" stroke="#7a5a10"/><path d="M17 1l5 6h-3v10h3l-5 6-5-6h3V7h-3z" fill="#e03040" stroke="#902030" stroke-width=".6"/></svg><svg style="position:absolute;left:1891px;top:412px;overflow:visible" width="24" height="24" viewBox="0 0 24 24"><ellipse cx="12" cy="7" rx="10" ry="3.5" fill="none" stroke="#c02030" stroke-width="1.2"/><ellipse cx="12" cy="12" rx="10" ry="3.5" fill="none" stroke="#c02030" stroke-width="1.2"/><ellipse cx="12" cy="17" rx="10" ry="3.5" fill="none" stroke="#c02030" stroke-width="1.2"/></svg><svg style="position:absolute;left:1891px;top:441px;overflow:visible" width="24" height="24" viewBox="0 0 24 24"><path d="M3 3l17 3v15L3 18z" fill="#f4f6fa" stroke="#1f3f90"/><path d="M6 7h11v3H7v3h10v3H6" fill="none" stroke="#c02030" stroke-width="1.1"/></svg><svg style="position:absolute;left:1891px;top:471px;overflow:visible" width="24" height="24" viewBox="0 0 24 24"><path d="M3 3l17 3v15L3 18z" fill="#f4f6fa" stroke="#1f3f90"/><path d="M6 7l11 2v9L6 16zM9 10l5 1v4l-5-1z" fill="none" stroke="#c02030" stroke-width="1.1"/></svg><div style="position:absolute;left:1893px;top:285px;width:20px;height:1px;background:#b8bcc4;"></div><div style="position:absolute;left:1889px;top:500px;width:27px;height:27px;background:#b8cff0;"></div><svg style="position:absolute;left:1891px;top:501px;overflow:visible" width="24" height="24" viewBox="0 0 24 24"><rect x="0" y="0" width="24" height="24" fill="#b8cff0"/><path d="M12 2l9 5v10l-9 5-9-5V7z" fill="none" stroke="#1f3f80" stroke-width="1.2"/><path d="M12 12l9-5M12 12L3 7M12 12v10" stroke="#c02030" stroke-width="1.3"/></svg><svg style="position:absolute;left:1891px;top:531px;overflow:visible" width="24" height="24" viewBox="0 0 24 24"><path d="M2 10c6 2 12 2 20-2v10c-8 4-14 4-20 2z" fill="#8ab0e8" stroke="#1f3f90"/><path d="M4 13c5 1 10 1 15-2" stroke="#c02030" stroke-width="2"/><path d="M4 16c5 1 10 1 15-2" stroke="#fff" stroke-width="1.5"/><path d="M14 1h6l-5 10-3-1z" fill="#e8b820"/></svg><div style="position:absolute;left:1889px;top:560px;width:27px;height:27px;background:#b8cff0;"></div><svg style="position:absolute;left:1891px;top:561px;overflow:visible" width="24" height="24" viewBox="0 0 24 24"><rect x="0" y="0" width="24" height="24" fill="#b8cff0"/><path d="M12 2l9 5v10l-9 5-9-5V7z" fill="none" stroke="#1f3f80" stroke-width="1.2"/><path d="M12 12L3 7M12 12v10" stroke="#c02030" stroke-width="1.3"/><path d="M10 14l10-12 3 2-10 12z" fill="#333"/></svg><div style="position:absolute;left:1886px;top:590px;width:33px;height:12px;background:linear-gradient(#c8ccd4,#b0b6c0);"><svg style="position:absolute;left:20px;top:2px;overflow:visible" width="8" height="9" viewBox="0 0 8 9"><path d="M0 1v7M2 1v7l4-3.5z" fill="#222" stroke="#222" stroke-width="1"/></svg></div><div style="position:absolute;left:1886px;top:604px;width:33px;height:310px;background:linear-gradient(90deg,#eef0f4,#dfe3ea);border:1px solid #c6cbd3;border-radius:3px;box-sizing:border-box;"></div><div style="position:absolute;left:1891px;top:607px;width:22px;height:2px;background:repeating-linear-gradient(90deg,#9aa0aa 0 2px,transparent 2px 4px);"></div><svg style="position:absolute;left:1891px;top:617px;overflow:visible" width="24" height="24" viewBox="0 0 24 24"><text x="1" y="11" font-size="12" font-weight="bold" fill="#8a94a8" font-family="Liberation Sans">xyz</text><circle cx="12" cy="17" r="3" fill="#8a94a8"/></svg><svg style="position:absolute;left:1891px;top:645px;overflow:visible" width="24" height="24" viewBox="0 0 24 24"><text x="1" y="10" font-size="12" font-weight="bold" fill="#8a94a8" font-family="Liberation Sans">xyz</text><circle cx="4" cy="17" r="2.5" fill="none" stroke="#8a94a8" stroke-width="1.2"/><path d="M7 17h8" stroke="#8a94a8" stroke-width="1.2"/><circle cx="19" cy="17" r="3" fill="#8a94a8"/></svg><svg style="position:absolute;left:1901px;top:675px;overflow:visible" width="4" height="7" viewBox="0 0 4 7"><path d="M0 0v7l4-3.5z" fill="#222"/></svg><svg style="position:absolute;left:1891px;top:688px;overflow:visible" width="24" height="24" viewBox="0 0 24 24"><path d="M3 22V2M1 4l2-3 2 3M3 22h20M21 20l2 2-2 2" fill="none" stroke="#8a94a8" stroke-width="1.2"/><text x="6" y="18" font-size="13" font-weight="bold" fill="#8a94a8" font-family="Liberation Sans">2D</text></svg><svg style="position:absolute;left:1891px;top:718px;overflow:visible" width="24" height="24" viewBox="0 0 24 24"><path d="M2 22L12 10M2 6c5 0 8 2 10 4" fill="none" stroke="#8a94a8" stroke-width="2"/><path d="M10 10h13l-5 7v5h-3v-5z" fill="#b8c8e0" stroke="#8a94a8"/></svg><div style="position:absolute;left:1888px;top:746px;width:29px;height:29px;background:linear-gradient(#eef0f3,#d6dbe2);border:1px solid #a8b0bc;border-radius:2px;box-sizing:border-box;"></div><svg style="position:absolute;left:1891px;top:749px;overflow:visible" width="24" height="24" viewBox="0 0 24 24"><text x="1" y="22" font-size="12" font-weight="bold" fill="#6a7488" font-family="Liberation Sans">2D</text><ellipse cx="15" cy="8" rx="4" ry="6" fill="none" stroke="#d8b040" stroke-width="2.2" transform="rotate(45 15 8)"/><ellipse cx="19" cy="4" rx="3" ry="5" fill="none" stroke="#d8b040" stroke-width="2" transform="rotate(45 19 4)"/></svg><div style="position:absolute;left:1888px;top:777px;width:29px;height:29px;background:linear-gradient(#eef0f3,#d6dbe2);border:1px solid #a8b0bc;border-radius:2px;box-sizing:border-box;"></div><svg style="position:absolute;left:1891px;top:780px;overflow:visible" width="24" height="24" viewBox="0 0 24 24"><path d="M3 3v10c0 6 4 9 10 9" fill="none" stroke="#6a7488" stroke-width="1.5"/><path d="M3 8v5" stroke="#e04040" stroke-dasharray="1 1"/><ellipse cx="15" cy="10" rx="4" ry="6" fill="none" stroke="#d8b040" stroke-width="2.2" transform="rotate(45 15 10)"/></svg><svg style="position:absolute;left:1891px;top:815px;overflow:visible" width="24" height="24" viewBox="0 0 24 24"><ellipse cx="9" cy="15" rx="4" ry="7" fill="none" stroke="#d8b040" stroke-width="2.5" transform="rotate(45 9 15)"/><ellipse cx="16" cy="8" rx="4" ry="7" fill="none" stroke="#d8b040" stroke-width="2.5" transform="rotate(45 16 8)"/></svg><svg style="position:absolute;left:1901px;top:840px;overflow:visible" width="4" height="7" viewBox="0 0 4 7"><path d="M0 0v7l4-3.5z" fill="#222"/></svg><div style="position:absolute;left:1888px;top:849px;width:29px;height:42px;background:linear-gradient(#fde7c0,#f8c572);border:1px solid #e0a448;border-radius:2px;box-sizing:border-box;"></div><svg style="position:absolute;left:1891px;top:852px;overflow:visible" width="24" height="24" viewBox="0 0 24 24"><rect x="2" y="3" width="16" height="16" fill="#fff" stroke="#445"/><path d="M4 7h10M4 10h10M4 13h10" stroke="#aab"/><path d="M16 1v10M11 6h10" stroke="#1f3f90" stroke-width="2.5"/><path d="M18 17l4 4" stroke="#333" stroke-width="2"/></svg><svg style="position:absolute;left:1901px;top:880px;overflow:visible" width="4" height="7" viewBox="0 0 4 7"><path d="M0 0v7l4-3.5z" fill="#222"/></svg><div style="position:absolute;left:1891px;top:895px;width:22px;height:1px;background:#b8bcc4;"></div><div style="position:absolute;left:1886px;top:910px;width:33px;height:11px;background:linear-gradient(#c8ccd4,#b0b6c0);border-radius:0 0 3px 3px;"><svg style="position:absolute;left:20px;top:2px;overflow:visible" width="8" height="9" viewBox="0 0 8 9"><path d="M0 1v7M2 1v7l4-3.5z" fill="#222" stroke="#222" stroke-width="1"/></svg></div>
</body></html>
